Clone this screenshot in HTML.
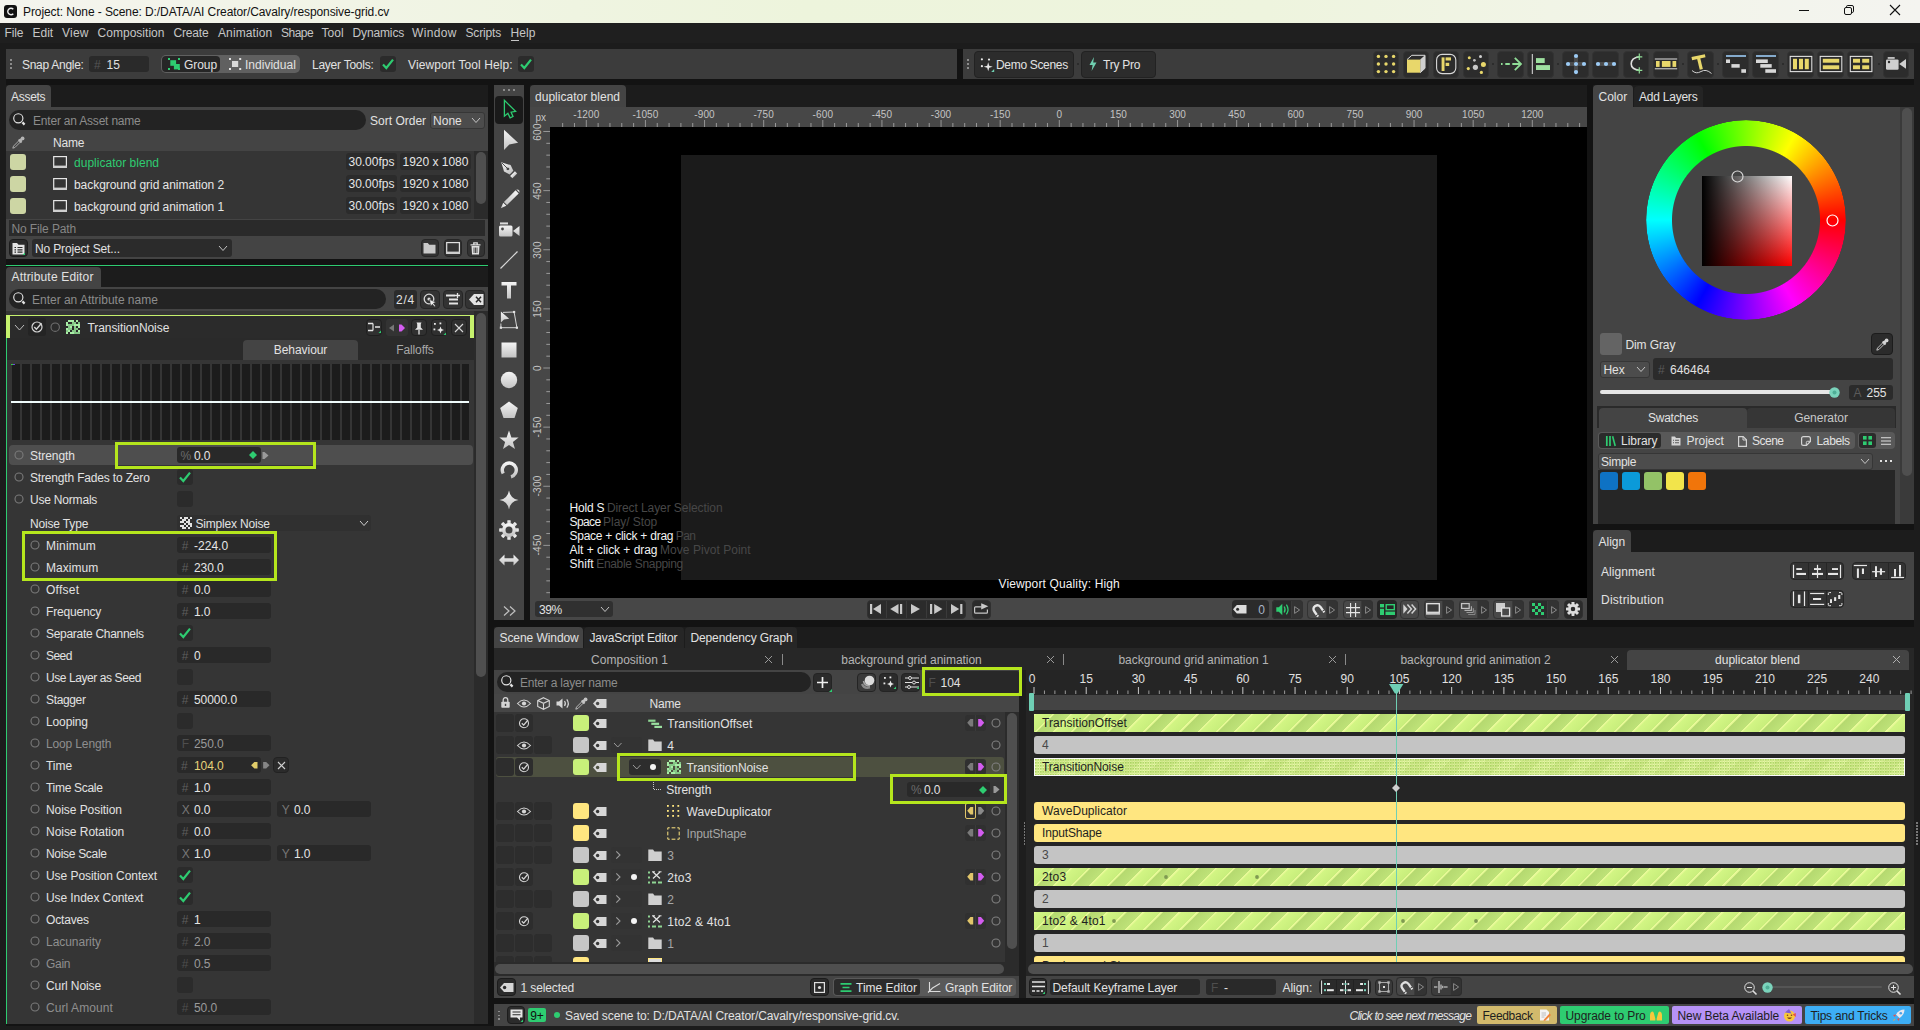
<!DOCTYPE html>
<html><head><meta charset="utf-8"><title>Cavalry</title>
<style>
html,body{margin:0;padding:0;background:#131313;}
body{width:1920px;height:1030px;overflow:hidden;position:relative;font-family:"Liberation Sans",sans-serif;font-size:12px;color:#dcdcdc;}
.a{position:absolute;box-sizing:border-box;}
.t{position:absolute;white-space:nowrap;display:block;}
svg{overflow:visible;}
</style></head><body>
<div class="a" style="left:0px;top:0px;width:1920px;height:23px;background:#eff4e1;background:linear-gradient(90deg,#f4f4ee 0,#f1f4e6 18%,#edf4dc 42%,#eef4de 66%,#f2f4e9 86%,#f4f4f0 100%);"></div>
<svg class="a" style="left:4px;top:5px;" width="13" height="13" viewBox="0 0 13 13"><rect x="0" y="0" width="13" height="13" rx="3" fill="#111"/><path d="M9.3 4.3 A3.2 3.2 0 1 0 9.3 8.7" fill="none" stroke="#eee" stroke-width="1.4"/></svg>
<span class="t" style="left:23.0px;top:1.5px;font-size:12px;color:#111;line-height:20px;letter-spacing:-0.09px;">Project: None - Scene: D:/DATA/AI Creator/Cavalry/responsive-grid.cv</span>
<svg class="a" style="left:1799px;top:5px;" width="10" height="11" viewBox="0 0 10 11"><path d="M0 5.5H10" stroke="#111" stroke-width="1"/></svg>
<svg class="a" style="left:1844px;top:5px;" width="10" height="10" viewBox="0 0 10 10"><rect x="0.5" y="2.5" width="7" height="7" rx="1.5" fill="none" stroke="#111"/><path d="M2.5 2.5V1.8Q2.5 0.5 3.8 0.5H8Q9.5 0.5 9.5 2V6.2Q9.5 7.5 8.2 7.5H7.5" fill="none" stroke="#111"/></svg>
<svg class="a" style="left:1890px;top:5px;" width="10" height="10" viewBox="0 0 10 10"><path d="M0 0L10 10M10 0L0 10" stroke="#111" stroke-width="1.1"/></svg>
<div class="a" style="left:0px;top:43px;width:1920px;height:6px;background:#1c1c1c;"></div>
<div class="a" style="left:0px;top:49px;width:6px;height:981px;background:#1c1c1c;"></div>
<div class="a" style="left:1914px;top:49px;width:6px;height:981px;background:#1c1c1c;"></div>
<div class="a" style="left:0px;top:1026px;width:1920px;height:4px;background:#1c1c1c;"></div>
<div class="a" style="left:0px;top:23px;width:1920px;height:20px;background:#1f1f1f;"></div>
<span class="t" style="left:4.5px;top:23.0px;font-size:12px;color:#c6c6c6;line-height:20px;letter-spacing:-0.14px;">File</span>
<span class="t" style="left:32.5px;top:23.0px;font-size:12px;color:#c6c6c6;line-height:20px;letter-spacing:-0.02px;">Edit</span>
<span class="t" style="left:62.0px;top:23.0px;font-size:12px;color:#c6c6c6;line-height:20px;letter-spacing:0.23px;">View</span>
<span class="t" style="left:97.5px;top:23.0px;font-size:12px;color:#c6c6c6;line-height:20px;letter-spacing:0.03px;">Composition</span>
<span class="t" style="left:173.5px;top:23.0px;font-size:12px;color:#c6c6c6;line-height:20px;letter-spacing:-0.18px;">Create</span>
<span class="t" style="left:218.0px;top:23.0px;font-size:12px;color:#c6c6c6;line-height:20px;letter-spacing:0.11px;">Animation</span>
<span class="t" style="left:281.0px;top:23.0px;font-size:12px;color:#c6c6c6;line-height:20px;letter-spacing:-0.51px;">Shape</span>
<span class="t" style="left:321.5px;top:23.0px;font-size:12px;color:#c6c6c6;line-height:20px;letter-spacing:0.01px;">Tool</span>
<span class="t" style="left:352.5px;top:23.0px;font-size:12px;color:#c6c6c6;line-height:20px;letter-spacing:-0.13px;">Dynamics</span>
<span class="t" style="left:412.0px;top:23.0px;font-size:12px;color:#c6c6c6;line-height:20px;letter-spacing:0.35px;">Window</span>
<span class="t" style="left:465.5px;top:23.0px;font-size:12px;color:#c6c6c6;line-height:20px;letter-spacing:-0.15px;">Scripts</span>
<span class="t" style="left:510.5px;top:23.0px;font-size:12px;color:#c6c6c6;line-height:20px;letter-spacing:0.04px;">Help</span>
<div class="a" style="left:510.5px;top:40px;width:8px;height:1px;background:#c6c6c6;"></div>
<div class="a" style="left:6px;top:49px;width:951px;height:30px;background:#3c3c3c;"></div>
<div class="a" style="left:10px;top:59px;width:2px;height:2px;background:#8c8c8c;"></div>
<div class="a" style="left:10px;top:63px;width:2px;height:2px;background:#8c8c8c;"></div>
<div class="a" style="left:10px;top:67px;width:2px;height:2px;background:#8c8c8c;"></div>
<span class="t" style="left:22.0px;top:55.0px;font-size:12px;color:#e2e2e2;line-height:20px;letter-spacing:-0.28px;">Snap Angle:</span>
<div class="a" style="left:89px;top:56px;width:60px;height:16px;background:#2a2a2a;border-radius:3px;"></div>
<span class="t" style="left:94.0px;top:55.0px;font-size:12px;color:#555;line-height:20px;letter-spacing:0.28px;">#</span>
<span class="t" style="left:106.5px;top:55.0px;font-size:12px;color:#e0e0e0;line-height:20px;">15</span>
<div class="a" style="left:161px;top:55px;width:139px;height:18px;background:#606060;border-radius:5px;"></div>
<div class="a" style="left:162px;top:56px;width:58px;height:16px;background:#262626;border-radius:4px;"></div>
<svg class="a" style="left:168px;top:58px;" width="13" height="13" viewBox="0 0 13 13"><g fill="#2ecc71"><rect x="0" y="0" width="2" height="2"/><rect x="10" y="0" width="2" height="2"/><rect x="0" y="10" width="2" height="2"/><rect x="10" y="10" width="2" height="2"/><rect x="2.3" y="2.2" width="5.8" height="5.6"/><rect x="5.9" y="6" width="5.9" height="5.4"/></g></svg>
<span class="t" style="left:184.0px;top:55.0px;font-size:12px;color:#e2e2e2;line-height:20px;letter-spacing:-0.07px;">Group</span>
<svg class="a" style="left:229px;top:58px;" width="13" height="13" viewBox="0 0 13 13"><g fill="#e2e2e2"><rect x="0" y="0" width="2" height="2"/><rect x="10.2" y="0" width="2" height="2"/><rect x="0" y="10" width="2" height="2"/><rect x="10.2" y="10" width="2" height="2"/><rect x="3" y="3" width="6.2" height="6" fill="#d8d8d8"/></g></svg>
<span class="t" style="left:245.0px;top:55.0px;font-size:12px;color:#e2e2e2;line-height:20px;letter-spacing:0.01px;">Individual</span>
<span class="t" style="left:312.0px;top:55.0px;font-size:12px;color:#e2e2e2;line-height:20px;letter-spacing:-0.25px;">Layer Tools:</span>
<div class="a" style="left:380px;top:56px;width:16px;height:16px;background:#2b2b2b;border-radius:3px;"></div>
<svg class="a" style="left:380px;top:56px;" width="16" height="16" viewBox="0 0 16 16"><path d="M3 8.6 L6.3 12 L13 3.6" fill="none" stroke="#2ecc71" stroke-width="2.2"/></svg>
<span class="t" style="left:408.0px;top:55.0px;font-size:12px;color:#e2e2e2;line-height:20px;letter-spacing:0.09px;">Viewport Tool Help:</span>
<div class="a" style="left:518px;top:56px;width:16px;height:16px;background:#2b2b2b;border-radius:3px;"></div>
<svg class="a" style="left:518px;top:56px;" width="16" height="16" viewBox="0 0 16 16"><path d="M3 8.6 L6.3 12 L13 3.6" fill="none" stroke="#2ecc71" stroke-width="2.2"/></svg>
<div class="a" style="left:963px;top:49px;width:951px;height:30px;background:#3c3c3c;"></div>
<div class="a" style="left:967px;top:59px;width:2px;height:2px;background:#8c8c8c;"></div>
<div class="a" style="left:967px;top:63px;width:2px;height:2px;background:#8c8c8c;"></div>
<div class="a" style="left:967px;top:67px;width:2px;height:2px;background:#8c8c8c;"></div>
<div class="a" style="left:974.3px;top:50.6px;width:99.3px;height:27px;background:#2c2c2c;border-radius:4px;border:1px solid #222;"></div>
<svg class="a" style="left:980px;top:57px;" width="14" height="15" viewBox="0 0 14 15"><g fill="#e8e8e8"><circle cx="1.9" cy="2.3" r="1.1"/><circle cx="9" cy="2.6" r="1.1"/><circle cx="1.9" cy="9.2" r="1.1"/><path d="M8.2 5.3 L9.2 8.8 L12.7 9.8 L9.2 10.8 L8.2 14.3 L7.2 10.8 L3.7 9.8 L7.2 8.8Z"/></g><path d="M11.2 15h3v-3z" fill="#6fcfb0"/></svg>
<span class="t" style="left:996.0px;top:55.0px;font-size:12px;color:#e2e2e2;line-height:20px;letter-spacing:-0.32px;">Demo Scenes</span>
<div class="a" style="left:1081px;top:50.6px;width:74.6px;height:27px;background:#2c2c2c;border-radius:4px;border:1px solid #222;"></div>
<svg class="a" style="left:1089px;top:57px;" width="8" height="14" viewBox="0 0 8 14"><path d="M5 0 L0.5 8 H3.6 L2.6 14 L7.5 5.5 H4.2 Z" fill="#6fcfb0"/></svg>
<span class="t" style="left:1103.0px;top:55.0px;font-size:12px;color:#e2e2e2;line-height:20px;letter-spacing:-0.25px;">Try Pro</span>
<svg class="a" style="left:1076.5px;top:63px;" width="2" height="2" viewBox="0 0 2 2"><circle cx="1" cy="1" r="1" fill="#272727"/></svg>
<div class="a" style="left:1372.7px;top:51px;width:26.6px;height:26.5px;background:#2c2c2c;border-radius:4px;border:1px solid #333333;"></div>
<div class="a" style="left:1402.5px;top:51px;width:26.6px;height:26.5px;background:#2c2c2c;border-radius:4px;border:1px solid #333333;"></div>
<div class="a" style="left:1432.5px;top:51px;width:26.6px;height:26.5px;background:#2c2c2c;border-radius:4px;border:1px solid #333333;"></div>
<div class="a" style="left:1462.5px;top:51px;width:26.6px;height:26.5px;background:#2c2c2c;border-radius:4px;border:1px solid #333333;"></div>
<div class="a" style="left:1497.4px;top:51px;width:26.6px;height:26.5px;background:#2c2c2c;border-radius:4px;border:1px solid #333333;"></div>
<div class="a" style="left:1527.4px;top:51px;width:26.6px;height:26.5px;background:#2c2c2c;border-radius:4px;border:1px solid #333333;"></div>
<div class="a" style="left:1562.4px;top:51px;width:26.6px;height:26.5px;background:#2c2c2c;border-radius:4px;border:1px solid #333333;"></div>
<div class="a" style="left:1592.4px;top:51px;width:26.6px;height:26.5px;background:#2c2c2c;border-radius:4px;border:1px solid #333333;"></div>
<div class="a" style="left:1622.5px;top:51px;width:26.6px;height:26.5px;background:#2c2c2c;border-radius:4px;border:1px solid #333333;"></div>
<div class="a" style="left:1652.5px;top:51px;width:26.6px;height:26.5px;background:#2c2c2c;border-radius:4px;border:1px solid #333333;"></div>
<div class="a" style="left:1687.4px;top:51px;width:26.6px;height:26.5px;background:#2c2c2c;border-radius:4px;border:1px solid #333333;"></div>
<div class="a" style="left:1722.4px;top:51px;width:26.6px;height:26.5px;background:#2c2c2c;border-radius:4px;border:1px solid #333333;"></div>
<div class="a" style="left:1752.4px;top:51px;width:26.6px;height:26.5px;background:#2c2c2c;border-radius:4px;border:1px solid #333333;"></div>
<div class="a" style="left:1787.4px;top:51px;width:26.6px;height:26.5px;background:#2c2c2c;border-radius:4px;border:1px solid #333333;"></div>
<div class="a" style="left:1817.4px;top:51px;width:26.6px;height:26.5px;background:#2c2c2c;border-radius:4px;border:1px solid #333333;"></div>
<div class="a" style="left:1847.4px;top:51px;width:26.6px;height:26.5px;background:#2c2c2c;border-radius:4px;border:1px solid #333333;"></div>
<div class="a" style="left:1882.7px;top:51px;width:26.6px;height:26.5px;background:#2c2c2c;border-radius:4px;border:1px solid #333333;"></div>
<svg class="a" style="left:1492.3px;top:63.2px;" width="2" height="2" viewBox="0 0 2 2"><circle cx="1" cy="1" r="1" fill="#272727"/></svg>
<svg class="a" style="left:1557.3px;top:63.2px;" width="2" height="2" viewBox="0 0 2 2"><circle cx="1" cy="1" r="1" fill="#272727"/></svg>
<svg class="a" style="left:1682.3px;top:63.2px;" width="2" height="2" viewBox="0 0 2 2"><circle cx="1" cy="1" r="1" fill="#272727"/></svg>
<svg class="a" style="left:1717.3px;top:63.2px;" width="2" height="2" viewBox="0 0 2 2"><circle cx="1" cy="1" r="1" fill="#272727"/></svg>
<svg class="a" style="left:1782.3px;top:63.2px;" width="2" height="2" viewBox="0 0 2 2"><circle cx="1" cy="1" r="1" fill="#272727"/></svg>
<svg class="a" style="left:1877.5px;top:63.2px;" width="2" height="2" viewBox="0 0 2 2"><circle cx="1" cy="1" r="1" fill="#272727"/></svg>
<svg class="a" style="left:1360px;top:45px" width="560" height="40" viewBox="1360 45 560 40"><circle cx="1378.4" cy="56.4" r="1.7" fill="#e8d76b"/><circle cx="1378.4" cy="64" r="1.7" fill="#e8d76b"/><circle cx="1378.4" cy="71.6" r="1.7" fill="#e8d76b"/><circle cx="1386" cy="56.4" r="1.7" fill="#e8d76b"/><circle cx="1386" cy="64" r="1.7" fill="#e8d76b"/><circle cx="1386" cy="71.6" r="1.7" fill="#e8d76b"/><circle cx="1393.6" cy="56.4" r="1.7" fill="#e8d76b"/><circle cx="1393.6" cy="64" r="1.7" fill="#e8d76b"/><circle cx="1393.6" cy="71.6" r="1.7" fill="#e8d76b"/><path d="M1407 59.6 L1411.8 55.3 H1425 V68.3 L1420.2 72.7" fill="#2c2c2c" stroke="#dcdcdc" stroke-width="1"/><path d="M1420.2 59.6 L1425 55.3 V68.3 L1420.2 72.7Z" fill="#cfcfcf"/><rect x="1407" y="59.6" width="13.2" height="13.1" fill="#e8d76b"/><rect x="1436.6" y="54.4" width="19.2" height="19.2" rx="5.5" fill="none" stroke="#d8d8d8" stroke-width="1.1"/><rect x="1441.6" y="57.4" width="2.9" height="13.6" fill="#e8d76b"/><rect x="1445.6" y="57.4" width="5.4" height="3.1" fill="#e8d76b"/><rect x="1445.6" y="62.8" width="3.6" height="3.2" fill="#e8d76b"/><circle cx="1469.3" cy="57.7" r="1.5" fill="#e8d76b"/><circle cx="1480.5" cy="56.4" r="1.5" fill="#d0d0d0"/><circle cx="1474.4" cy="60.3" r="1.4" fill="#bcbcbc"/><circle cx="1483.4" cy="64.4" r="2.5" fill="#e8d76b"/><circle cx="1475.4" cy="67.3" r="2.6" fill="#c8c8c8"/><circle cx="1468.3" cy="68.6" r="1.6" fill="#e8d76b"/><circle cx="1481.4" cy="72.4" r="1.6" fill="#e8d76b"/><path d="M1501 64H1502.6M1505.3 64H1509.8M1512.3 64H1520.5M1514.8 57.8L1521 64L1514.8 70.2" fill="none" stroke="#8fdc96" stroke-width="1.8"/><rect x="1531.8" y="54" width="1" height="20" fill="#e0e0e0"/><rect x="1536" y="58.1" width="8.7" height="4.9" fill="#9ee0a0"/><rect x="1536" y="65.1" width="14" height="4.9" fill="#9ee0a0"/><path d="M1576 56V72M1568 64H1584" stroke="#4c4c4c" stroke-width="4"/><circle cx="1576" cy="56" r="2.1" fill="#9ccbf5"/><circle cx="1576" cy="64" r="2.1" fill="#9ccbf5"/><circle cx="1576" cy="72.1" r="2.1" fill="#9ccbf5"/><circle cx="1568" cy="64" r="2.1" fill="#9ccbf5"/><circle cx="1584" cy="64" r="2.1" fill="#9ccbf5"/><path d="M1598 64H1614" stroke="#4c4c4c" stroke-width="4" stroke-linecap="round"/><circle cx="1598" cy="64" r="2.1" fill="#9ccbf5"/><circle cx="1606" cy="64" r="2.1" fill="#9ccbf5"/><circle cx="1614" cy="64" r="2.1" fill="#9ccbf5"/><path d="M1639.3 56.8 Q1631.2 58 1631.2 63.8 Q1631.2 69.3 1639.3 70.3" fill="none" stroke="#dedede" stroke-width="1.6"/><path d="M1639.3 53.6V60M1636.3 56.8H1642.3M1639.3 67.2V73.4M1636.3 70.3H1642.3" stroke="#8fdc96" stroke-width="1.2"/><path d="M1654.8 59H1677.2M1654.8 68.8H1677.2" stroke="#e0e0e0" stroke-width="1"/><rect x="1656" y="61" width="3.6" height="5.9" fill="#e8d76b"/><rect x="1661.9" y="61" width="8.6" height="5.9" fill="#e8d76b"/><rect x="1672.5" y="61" width="3.7" height="5.9" fill="#e8d76b"/><path d="M1691.8 58.6L1705.2 55.8" stroke="#e8d76b" stroke-width="3.2"/><path d="M1698.4 57.4L1701.3 69.3" stroke="#e8d76b" stroke-width="3.2"/><path d="M1692 70.5 Q1696 74.5 1701 71.5 T1711.5 73.5" fill="none" stroke="#d0d0d0" stroke-width="1"/><rect x="1726" y="55.2" width="20" height="1.6" fill="#9ccbf5"/><rect x="1726" y="59.4" width="4" height="3.6" fill="#d8d8d8"/><rect x="1731.4" y="64.1" width="8.3" height="3.6" fill="#d8d8d8"/><rect x="1741.3" y="69.2" width="4.7" height="3.6" fill="#d8d8d8"/><rect x="1756" y="55.2" width="20" height="1.6" fill="#9ccbf5"/><rect x="1756" y="59.4" width="11.8" height="3.6" fill="#d8d8d8"/><rect x="1760.3" y="64.1" width="11.4" height="3.6" fill="#d8d8d8"/><rect x="1765.3" y="69.2" width="10.7" height="3.6" fill="#d8d8d8"/><rect x="1790.2" y="56.4" width="21.6" height="15.2" fill="none" stroke="#e0e0e0" stroke-width="1.1"/><rect x="1820.2" y="56.4" width="21.6" height="15.2" fill="none" stroke="#e0e0e0" stroke-width="1.1"/><rect x="1850.3" y="56.4" width="21.6" height="15.2" fill="none" stroke="#e0e0e0" stroke-width="1.1"/><rect x="1793" y="58.8" width="4" height="10.4" fill="#e8d76b"/><rect x="1799" y="58.8" width="4" height="10.4" fill="#e8d76b"/><rect x="1804.8" y="58.8" width="4" height="10.4" fill="#e8d76b"/><rect x="1822.8" y="58.8" width="16.4" height="3.9" fill="#e8d76b"/><rect x="1822.8" y="65.3" width="16.4" height="3.9" fill="#e8d76b"/><rect x="1853" y="58.8" width="7" height="3.9" fill="#e8d76b"/><rect x="1853" y="65.3" width="7" height="3.9" fill="#e8d76b"/><rect x="1862.2" y="58.8" width="7" height="3.9" fill="#e8d76b"/><rect x="1862.2" y="65.3" width="7" height="3.9" fill="#e8d76b"/><rect x="1886" y="59.4" width="12.6" height="10.3" rx="1.2" fill="#cfcfcf"/><rect x="1887.7" y="57.1" width="7" height="1.7" fill="#cfcfcf"/><path d="M1899.2 64 L1906 59 V68.8Z" fill="#cfcfcf"/><circle cx="1889" cy="62" r="1.2" fill="#2c2c2c"/></svg>
<div class="a" style="left:6px;top:85px;width:482px;height:22px;background:#1c1c1c;"></div>
<div class="a" style="left:6px;top:85px;width:45px;height:22px;background:#444444;border-radius:4px 4px 0 0;"></div>
<span class="t" style="left:11.0px;top:86.5px;font-size:12px;color:#e2e2e2;line-height:20px;letter-spacing:-0.28px;">Assets</span>
<div class="a" style="left:6px;top:107px;width:482px;height:152px;background:#444444;"></div>
<div class="a" style="left:9px;top:110px;width:357px;height:20px;background:#232323;border-radius:10px;"></div>
<svg class="a" style="left:13px;top:113px;" width="14" height="14" viewBox="0 0 14 14"><circle cx="5.3" cy="5.3" r="4.6" fill="none" stroke="#e4e4e4" stroke-width="1.15"/><path d="M9.4 9.4 L11.6 11.6" stroke="#e4e4e4" stroke-width="2.2"/></svg>
<span class="t" style="left:33.0px;top:110.5px;font-size:12px;color:#8c8c8c;line-height:20px;letter-spacing:-0.2px;">Enter an Asset name</span>
<span class="t" style="left:370.0px;top:110.5px;font-size:12px;color:#e2e2e2;line-height:20px;letter-spacing:0.01px;">Sort Order</span>
<div class="a" style="left:430px;top:112px;width:55px;height:17px;background:#4c4c4c;border-radius:3px;border:1px solid #363636;"></div>
<span class="t" style="left:433.0px;top:110.5px;font-size:12px;color:#e2e2e2;line-height:20px;letter-spacing:0.03px;">None</span>
<svg class="a" style="left:472.0px;top:118.25px;" width="8" height="4.5" viewBox="0 0 8 4.5"><path d="M0 0 L4.0 4.5 L8 0" fill="none" stroke="#c4c4c4" stroke-width="1"/></svg>
<div class="a" style="left:6px;top:132px;width:482px;height:19px;background:#444444;"></div>
<svg class="a" style="left:12px;top:135.5px;" width="13" height="13" viewBox="0 0 13 13"><path d="M0.8 12.2 L1.5 10.1 L7.1 4.5 L8.5 5.9 L2.9 11.5 Z" fill="none" stroke="#b4b4b4" stroke-width="0.9"/><path d="M6.6 3.4 L9.6 6.4" stroke="#b4b4b4" stroke-width="2.1"/><path d="M8 4.8 L10.3 2.6" stroke="#b4b4b4" stroke-width="2.6"/><circle cx="10.6" cy="2.4" r="1.9" fill="#b4b4b4"/></svg>
<span class="t" style="left:53.0px;top:132.5px;font-size:12px;color:#e2e2e2;line-height:20px;letter-spacing:-0.21px;">Name</span>
<div class="a" style="left:6px;top:151px;width:468px;height:68px;background:#353535;"></div>
<div class="a" style="left:474px;top:151px;width:14px;height:68px;background:#2b2b2b;"></div>
<div class="a" style="left:10px;top:153.8px;width:16px;height:16.4px;background:#cdd6a4;border-radius:3px;"></div>
<svg class="a" style="left:52.5px;top:155.5px;" width="15" height="13" viewBox="0 0 15 13"><rect x="0.7" y="0.6" width="12.7" height="10.6" fill="none" stroke="#e6e6e6" stroke-width="1.2"/><rect x="0.1" y="9.6" width="13.9" height="2.4" fill="#cfcfcf"/></svg>
<span class="t" style="left:74.0px;top:152.5px;font-size:12px;color:#2ecc71;line-height:20px;letter-spacing:0.02px;">duplicator blend</span>
<div class="a" style="left:346px;top:153px;width:51px;height:17px;background:#2b2b2b;border-radius:3px;"></div>
<span class="t" style="left:348.5px;top:152.0px;font-size:12px;color:#e6e6e6;line-height:20px;letter-spacing:-0.02px;">30.00fps</span>
<div class="a" style="left:400px;top:153px;width:71px;height:17px;background:#2b2b2b;border-radius:3px;"></div>
<span class="t" style="left:402.5px;top:152.0px;font-size:12px;color:#e6e6e6;line-height:20px;letter-spacing:-0.02px;">1920 x 1080</span>
<div class="a" style="left:10px;top:175.8px;width:16px;height:16.4px;background:#cdd6a4;border-radius:3px;"></div>
<svg class="a" style="left:52.5px;top:177.5px;" width="15" height="13" viewBox="0 0 15 13"><rect x="0.7" y="0.6" width="12.7" height="10.6" fill="none" stroke="#e6e6e6" stroke-width="1.2"/><rect x="0.1" y="9.6" width="13.9" height="2.4" fill="#cfcfcf"/></svg>
<span class="t" style="left:74.0px;top:174.5px;font-size:12px;color:#e6e6e6;line-height:20px;letter-spacing:-0.05px;">background grid animation 2</span>
<div class="a" style="left:346px;top:175px;width:51px;height:17px;background:#2b2b2b;border-radius:3px;"></div>
<span class="t" style="left:348.5px;top:174.0px;font-size:12px;color:#e6e6e6;line-height:20px;letter-spacing:-0.02px;">30.00fps</span>
<div class="a" style="left:400px;top:175px;width:71px;height:17px;background:#2b2b2b;border-radius:3px;"></div>
<span class="t" style="left:402.5px;top:174.0px;font-size:12px;color:#e6e6e6;line-height:20px;letter-spacing:-0.02px;">1920 x 1080</span>
<div class="a" style="left:10px;top:197.8px;width:16px;height:16.4px;background:#cdd6a4;border-radius:3px;"></div>
<svg class="a" style="left:52.5px;top:199.5px;" width="15" height="13" viewBox="0 0 15 13"><rect x="0.7" y="0.6" width="12.7" height="10.6" fill="none" stroke="#e6e6e6" stroke-width="1.2"/><rect x="0.1" y="9.6" width="13.9" height="2.4" fill="#cfcfcf"/></svg>
<span class="t" style="left:74.0px;top:196.5px;font-size:12px;color:#e6e6e6;line-height:20px;letter-spacing:-0.05px;">background grid animation 1</span>
<div class="a" style="left:346px;top:197px;width:51px;height:17px;background:#2b2b2b;border-radius:3px;"></div>
<span class="t" style="left:348.5px;top:196.0px;font-size:12px;color:#e6e6e6;line-height:20px;letter-spacing:-0.02px;">30.00fps</span>
<div class="a" style="left:400px;top:197px;width:71px;height:17px;background:#2b2b2b;border-radius:3px;"></div>
<span class="t" style="left:402.5px;top:196.0px;font-size:12px;color:#e6e6e6;line-height:20px;letter-spacing:-0.02px;">1920 x 1080</span>
<div class="a" style="left:476px;top:152px;width:10px;height:52px;background:#4f4f4f;border-radius:5px;"></div>
<div class="a" style="left:9px;top:220px;width:476px;height:16px;background:#2a2a2a;"></div>
<span class="t" style="left:11.5px;top:218.5px;font-size:12px;color:#868686;line-height:20px;letter-spacing:-0.12px;">No File Path</span>
<div class="a" style="left:9px;top:239px;width:19px;height:18px;background:#2b2b2b;border-radius:4px;border:1px solid #1c1c1c;"></div>
<svg class="a" style="left:12px;top:241.5px;" width="13" height="13" viewBox="0 0 13 13"><path d="M0.5 1H5L6.5 2.8H12.5V12.5H0.5Z" fill="#e4e4e4"/><path d="M2.5 5.5H4M5.5 5.5H10.5M2.5 7.8H4M5.5 7.8H10.5M2.5 10.1H4M5.5 10.1H10.5" stroke="#2b2b2b" stroke-width="1.2"/><path d="M10.5 13h2.5v-2.5z" fill="#2ecc71"/></svg>
<div class="a" style="left:32px;top:239px;width:200px;height:18px;background:#2b2b2b;border-radius:3px;"></div>
<span class="t" style="left:35.0px;top:238.5px;font-size:12px;color:#e2e2e2;line-height:20px;letter-spacing:-0.15px;">No Project Set...</span>
<svg class="a" style="left:219.0px;top:246.25px;" width="8" height="4.5" viewBox="0 0 8 4.5"><path d="M0 0 L4.0 4.5 L8 0" fill="none" stroke="#c4c4c4" stroke-width="1"/></svg>
<div class="a" style="left:420.5px;top:238.7px;width:18.5px;height:18.3px;background:#333;border-radius:4px;border:1px solid #262626;"></div>
<div class="a" style="left:443.6px;top:238.7px;width:18.5px;height:18.3px;background:#333;border-radius:4px;border:1px solid #262626;"></div>
<div class="a" style="left:466.7px;top:238.7px;width:18.5px;height:18.3px;background:#333;border-radius:4px;border:1px solid #262626;"></div>
<svg class="a" style="left:423px;top:242px;" width="13" height="12" viewBox="0 0 13 12"><path d="M0.5 1H4.8L6.3 2.8H12.5V11.5H0.5Z" fill="#c9c9c9"/></svg>
<svg class="a" style="left:445.5px;top:242px;" width="15" height="13" viewBox="0 0 15 13"><rect x="0.7" y="0.6" width="12.7" height="10.6" fill="none" stroke="#e0e0e0" stroke-width="1.2"/><rect x="0.1" y="9.6" width="13.9" height="2.4" fill="#cfcfcf"/></svg>
<svg class="a" style="left:470px;top:241.5px;" width="11" height="13" viewBox="0 0 11 13"><path d="M0.5 2.8H10.5M3.8 2.5V0.8H7.2V2.5" stroke="#e0e0e0" stroke-width="1.3" fill="none"/><path d="M1.5 4H9.5L9 12.5H2Z" fill="#e0e0e0"/><path d="M4 5.5V11M5.5 5.5V11M7 5.5V11" stroke="#2b2b2b" stroke-width="0.8"/></svg>
<div class="a" style="left:6px;top:264.7px;width:482px;height:1.8px;background:#2ecc71;"></div>
<div class="a" style="left:6px;top:266.5px;width:482px;height:20.5px;background:#1c1c1c;"></div>
<div class="a" style="left:6px;top:267px;width:95px;height:20px;background:#444444;border-radius:4px 4px 0 0;"></div>
<span class="t" style="left:11.5px;top:267.0px;font-size:12px;color:#e2e2e2;line-height:20px;letter-spacing:0.17px;">Attribute Editor</span>
<div class="a" style="left:6px;top:287px;width:482px;height:737px;background:#444444;"></div>
<div class="a" style="left:6px;top:311px;width:468px;height:713px;background:#353535;"></div>
<div class="a" style="left:474px;top:311px;width:14px;height:713px;background:#2b2b2b;"></div>
<div class="a" style="left:9px;top:289px;width:377px;height:20px;background:#232323;border-radius:10px;"></div>
<svg class="a" style="left:13px;top:292px;" width="14" height="14" viewBox="0 0 14 14"><circle cx="5.3" cy="5.3" r="4.6" fill="none" stroke="#e4e4e4" stroke-width="1.15"/><path d="M9.4 9.4 L11.6 11.6" stroke="#e4e4e4" stroke-width="2.2"/></svg>
<span class="t" style="left:32.0px;top:289.5px;font-size:12px;color:#8c8c8c;line-height:20px;letter-spacing:-0.01px;">Enter an Attribute name</span>
<div class="a" style="left:394px;top:290px;width:23px;height:19px;background:#2b2b2b;border-radius:3px;"></div>
<span class="t" style="left:396.1px;top:289.5px;font-size:12px;color:#e2e2e2;line-height:20px;letter-spacing:0.71px;">2/4</span>
<div class="a" style="left:420.2px;top:289.5px;width:19.4px;height:19.2px;background:#333;border-radius:4px;border:1px solid #262626;"></div>
<div class="a" style="left:443.4px;top:289.5px;width:19.4px;height:19.2px;background:#333;border-radius:4px;border:1px solid #262626;"></div>
<div class="a" style="left:465.3px;top:289.5px;width:19.4px;height:19.2px;background:#333;border-radius:4px;border:1px solid #262626;"></div>
<svg class="a" style="left:423px;top:292.5px;" width="14" height="14" viewBox="0 0 14 14"><circle cx="6" cy="6" r="4.8" fill="none" stroke="#d8d8d8" stroke-width="1.3"/><circle cx="6" cy="6" r="1.6" fill="#d8d8d8"/><path d="M6.5 6.5 L13 9.3 L10.3 10.3 L12.5 13 L11.5 13.8 L9.3 11.2 L7.8 13.3 Z" fill="#f0f0f0" stroke="#2b2b2b" stroke-width="0.5"/></svg>
<svg class="a" style="left:446px;top:293px;" width="14" height="13" viewBox="0 0 14 13"><path d="M0 2.5H9M3 6.5H12M3 10.5H12" stroke="#e4e4e4" stroke-width="1.8"/><path d="M11.5 0V5M9 2.5H14" stroke="#e4e4e4" stroke-width="1.3"/></svg>
<svg class="a" style="left:468.5px;top:294px;" width="15" height="11" viewBox="0 0 15 11"><path d="M5 0H14.5V11H5L0 5.5Z" fill="#e4e4e4"/><path d="M7 2.8L12 8.2M12 2.8L7 8.2" stroke="#2b2b2b" stroke-width="1.5"/></svg>
<div class="a" style="left:476px;top:312.5px;width:10px;height:364px;background:#4f4f4f;border-radius:5px;"></div>
<div class="a" style="left:6px;top:315px;width:468px;height:23px;background:#2b2b2b;"></div>
<div class="a" style="left:6px;top:314.8px;width:468px;height:1.6px;background:#c6f16d;"></div>
<div class="a" style="left:6px;top:315px;width:4px;height:23px;background:#c6f16d;"></div>
<div class="a" style="left:470px;top:315px;width:4px;height:23px;background:#c6f16d;"></div>
<div class="a" style="left:6px;top:338px;width:1.3px;height:686px;background:#2ecc71;"></div>
<svg class="a" style="left:14.5px;top:325.0px;" width="9" height="5" viewBox="0 0 9 5"><path d="M0 0 L4.5 5 L9 0" fill="none" stroke="#bdbdbd" stroke-width="1"/></svg>
<div class="a" style="left:28px;top:318px;width:18px;height:18px;background:#242424;border-radius:3px;"></div>
<svg class="a" style="left:31px;top:321px;" width="12" height="12" viewBox="0 0 12 12"><circle cx="6" cy="6" r="5" fill="none" stroke="#d6d6d6" stroke-width="1.2"/><path d="M3.3 6 L5.4 8.2 L10.5 2.2" fill="none" stroke="#d6d6d6" stroke-width="1.4"/></svg>
<svg class="a" style="left:49.8px;top:321.8px;" width="10.4" height="10.4" viewBox="0 0 10.4 10.4"><circle cx="5.2" cy="5.2" r="4.2" fill="none" stroke="#6e6e6e" stroke-width="1.1"/></svg>
<svg class="a" style="left:66px;top:320px;shape-rendering:crispEdges;" width="14" height="14" viewBox="0 0 14 14"><rect x="2.00" y="0.00" width="2.00" height="2.00" fill="#a8eea6"/><rect x="4.00" y="0.00" width="2.00" height="2.00" fill="#a8eea6"/><rect x="6.00" y="0.00" width="2.00" height="2.00" fill="#a8eea6"/><rect x="10.00" y="0.00" width="2.00" height="2.00" fill="#a8eea6"/><rect x="0.00" y="2.00" width="2.00" height="2.00" fill="#a8eea6"/><rect x="6.00" y="2.00" width="2.00" height="2.00" fill="#84c686"/><rect x="8.00" y="2.00" width="2.00" height="2.00" fill="#84c686"/><rect x="12.00" y="2.00" width="2.00" height="2.00" fill="#84c686"/><rect x="0.00" y="4.00" width="2.00" height="2.00" fill="#a8eea6"/><rect x="2.00" y="4.00" width="2.00" height="2.00" fill="#84c686"/><rect x="4.00" y="4.00" width="2.00" height="2.00" fill="#84c686"/><rect x="6.00" y="4.00" width="2.00" height="2.00" fill="#84c686"/><rect x="8.00" y="4.00" width="2.00" height="2.00" fill="#a8eea6"/><rect x="10.00" y="4.00" width="2.00" height="2.00" fill="#a8eea6"/><rect x="12.00" y="4.00" width="2.00" height="2.00" fill="#a8eea6"/><rect x="2.00" y="6.00" width="2.00" height="2.00" fill="#84c686"/><rect x="4.00" y="6.00" width="2.00" height="2.00" fill="#a8eea6"/><rect x="8.00" y="6.00" width="2.00" height="2.00" fill="#84c686"/><rect x="12.00" y="6.00" width="2.00" height="2.00" fill="#a8eea6"/><rect x="0.00" y="8.00" width="2.00" height="2.00" fill="#a8eea6"/><rect x="2.00" y="8.00" width="2.00" height="2.00" fill="#84c686"/><rect x="4.00" y="8.00" width="2.00" height="2.00" fill="#84c686"/><rect x="8.00" y="8.00" width="2.00" height="2.00" fill="#84c686"/><rect x="10.00" y="8.00" width="2.00" height="2.00" fill="#84c686"/><rect x="0.00" y="10.00" width="2.00" height="2.00" fill="#84c686"/><rect x="2.00" y="10.00" width="2.00" height="2.00" fill="#a8eea6"/><rect x="6.00" y="10.00" width="2.00" height="2.00" fill="#84c686"/><rect x="8.00" y="10.00" width="2.00" height="2.00" fill="#84c686"/><rect x="12.00" y="10.00" width="2.00" height="2.00" fill="#a8eea6"/><rect x="0.00" y="12.00" width="2.00" height="2.00" fill="#a8eea6"/><rect x="4.00" y="12.00" width="2.00" height="2.00" fill="#a8eea6"/><rect x="6.00" y="12.00" width="2.00" height="2.00" fill="#a8eea6"/><rect x="8.00" y="12.00" width="2.00" height="2.00" fill="#84c686"/><rect x="10.00" y="12.00" width="2.00" height="2.00" fill="#84c686"/><rect x="12.00" y="12.00" width="2.00" height="2.00" fill="#84c686"/></svg>
<span class="t" style="left:87.5px;top:317.5px;font-size:12px;color:#e2e2e2;line-height:20px;letter-spacing:-0.08px;">TransitionNoise</span>
<div class="a" style="left:365.5px;top:318.7px;width:16.8px;height:17px;background:#303030;border-radius:4px;border:1px solid #1f1f1f;"></div>
<div class="a" style="left:410.5px;top:318.7px;width:16.8px;height:17px;background:#303030;border-radius:4px;border:1px solid #1f1f1f;"></div>
<div class="a" style="left:430.6px;top:318.7px;width:16.8px;height:17px;background:#303030;border-radius:4px;border:1px solid #1f1f1f;"></div>
<div class="a" style="left:450.7px;top:318.7px;width:16.8px;height:17px;background:#303030;border-radius:4px;border:1px solid #1f1f1f;"></div>
<svg class="a" style="left:367.5px;top:322px;" width="13" height="11" viewBox="0 0 13 11"><path d="M0 1.5H5M0 8.5H5M7 5H12" stroke="#e6e6e6" stroke-width="1.6"/><path d="M5 1.5V8.5" stroke="#e6e6e6" stroke-width="1.2"/><path d="M10.5 11h2.5v-2.5z" fill="#2ecc71"/></svg>
<div class="a" style="left:386px;top:319px;width:22px;height:17px;background:#333;border-radius:3px;"></div>
<svg class="a" style="left:388px;top:323.5px;" width="8" height="8" viewBox="0 0 8 8"><path d="M6 0.5V7.5L1 4Z" fill="#777"/></svg>
<svg class="a" style="left:398px;top:323.5px;" width="8" height="8" viewBox="0 0 8 8"><path d="M1 0.5H3.5L7 4L3.5 7.5H1Z" fill="#d35cf0"/></svg>
<svg class="a" style="left:413.5px;top:321.5px;" width="10" height="13" viewBox="0 0 10 13"><path d="M2.5 0.5H7.5L6.8 2V5.5L9 7.8H1L3.2 5.5V2Z" fill="#e4e4e4"/><path d="M5 8V12.5" stroke="#e4e4e4" stroke-width="1.3"/></svg>
<svg class="a" style="left:432.5px;top:321.5px;" width="13" height="13" viewBox="0 0 13 13"><g fill="#e8e8e8"><rect x="1" y="1" width="1.8" height="1.8"/><rect x="6.5" y="0.5" width="1.8" height="1.8"/><rect x="0.5" y="6.5" width="1.8" height="1.8"/><path d="M7.5 4.5 L8.5 7 L11 8 L8.5 9 L7.5 11.5 L6.5 9 L4 8 L6.5 7Z"/></g><path d="M10.5 13h2.5v-2.5z" fill="#2ecc71"/></svg>
<svg class="a" style="left:454.5px;top:323.5px;" width="8" height="8" viewBox="0 0 8 8"><path d="M0 0L8 8M8 0L0 8" stroke="#d8d8d8" stroke-width="1.1"/></svg>
<div class="a" style="left:7.3px;top:338px;width:466.7px;height:22px;background:#2a2a2a;"></div>
<div class="a" style="left:243px;top:340px;width:115px;height:20px;background:#444444;border-radius:4px 4px 0 0;"></div>
<span class="t" style="left:273.8px;top:340.0px;font-size:12px;color:#e2e2e2;line-height:20px;letter-spacing:-0.06px;">Behaviour</span>
<span class="t" style="left:396.3px;top:340.0px;font-size:12px;color:#a8a8a8;line-height:20px;letter-spacing:-0.13px;">Falloffs</span>
<div class="a" style="left:11.9px;top:364px;width:457.4px;height:76px;background:#1c1c1c;background:repeating-linear-gradient(90deg,#1c1c1c 0,#1c1c1c 8.1px,#353535 8.1px,#353535 10px);"></div>
<div class="a" style="left:11px;top:401px;width:458.3px;height:2.1px;background:#f0fcfc;"></div>
<div class="a" style="left:11px;top:364px;width:2px;height:1px;background:#2ecc40;"></div>
<div class="a" style="left:13px;top:364px;width:2px;height:1px;background:#6a4ae0;"></div>
<div class="a" style="left:9px;top:445px;width:464px;height:20px;background:#4e4e4e;border-radius:4px;"></div>
<div class="a" style="left:115px;top:442px;width:201px;height:27px;border:3px solid #b5e61d;"></div>
<svg class="a" style="left:14px;top:450px;" width="10" height="10" viewBox="0 0 10 10"><circle cx="5" cy="5" r="4" fill="none" stroke="#7a7a7a" stroke-width="1.1"/></svg>
<span class="t" style="left:30.0px;top:445.5px;font-size:12px;color:#e2e2e2;line-height:20px;letter-spacing:-0.05px;">Strength</span>
<div class="a" style="left:177px;top:447px;width:84px;height:16px;background:#292929;border-radius:3px;"></div>
<span class="t" style="left:180.5px;top:445.5px;font-size:12px;color:#6a6a6a;line-height:20px;letter-spacing:-1.05px;">%</span>
<span class="t" style="left:194.0px;top:445.5px;font-size:12px;color:#e6e6e6;line-height:20px;letter-spacing:-0.13px;">0.0</span>
<svg class="a" style="left:249px;top:451px;" width="8" height="8" viewBox="0 0 8 8"><path d="M4 0L8 4L4 8L0 4Z" fill="#2ecc71"/></svg>
<svg class="a" style="left:262px;top:451.5px;" width="7" height="7" viewBox="0 0 7 7"><path d="M0.5 0H2.5L6.5 3.5L2.5 7H0.5Z" fill="#9a9a9a"/></svg>
<svg class="a" style="left:14px;top:472px;" width="10" height="10" viewBox="0 0 10 10"><circle cx="5" cy="5" r="4" fill="none" stroke="#7a7a7a" stroke-width="1.1"/></svg>
<span class="t" style="left:30.0px;top:467.5px;font-size:12px;color:#e2e2e2;line-height:20px;letter-spacing:-0.17px;">Strength Fades to Zero</span>
<div class="a" style="left:177px;top:469px;width:16px;height:16px;background:#2b2b2b;border-radius:3px;"></div>
<svg class="a" style="left:177px;top:469px;" width="16" height="16" viewBox="0 0 16 16"><path d="M3 8.6 L6.3 12 L13 3.6" fill="none" stroke="#2ecc71" stroke-width="2.2"/></svg>
<svg class="a" style="left:14px;top:494px;" width="10" height="10" viewBox="0 0 10 10"><circle cx="5" cy="5" r="4" fill="none" stroke="#7a7a7a" stroke-width="1.1"/></svg>
<span class="t" style="left:30.0px;top:489.5px;font-size:12px;color:#e2e2e2;line-height:20px;letter-spacing:-0.2px;">Use Normals</span>
<div class="a" style="left:177px;top:491px;width:16px;height:16px;background:#2b2b2b;border-radius:3px;"></div>
<span class="t" style="left:30.0px;top:513.5px;font-size:12px;color:#e2e2e2;line-height:20px;letter-spacing:-0.16px;">Noise Type</span>
<div class="a" style="left:177px;top:515px;width:194px;height:16px;background:#303030;border-radius:3px;"></div>
<svg class="a" style="left:180px;top:517px;shape-rendering:crispEdges;" width="12" height="12" viewBox="0 0 12 12"><rect x="0" y="0" width="2" height="2" fill="#e2e2e2"/><rect x="4" y="0" width="2" height="2" fill="#e2e2e2"/><rect x="6" y="0" width="2" height="2" fill="#e2e2e2"/><rect x="10" y="0" width="2" height="2" fill="#e2e2e2"/><rect x="2" y="2" width="2" height="2" fill="#e2e2e2"/><rect x="4" y="2" width="2" height="2" fill="#e2e2e2"/><rect x="8" y="2" width="2" height="2" fill="#e2e2e2"/><rect x="0" y="4" width="2" height="2" fill="#e2e2e2"/><rect x="2" y="4" width="2" height="2" fill="#e2e2e2"/><rect x="6" y="4" width="2" height="2" fill="#e2e2e2"/><rect x="8" y="4" width="2" height="2" fill="#e2e2e2"/><rect x="4" y="6" width="2" height="2" fill="#e2e2e2"/><rect x="8" y="6" width="2" height="2" fill="#e2e2e2"/><rect x="10" y="6" width="2" height="2" fill="#e2e2e2"/><rect x="0" y="8" width="2" height="2" fill="#e2e2e2"/><rect x="2" y="8" width="2" height="2" fill="#e2e2e2"/><rect x="6" y="8" width="2" height="2" fill="#e2e2e2"/><rect x="10" y="8" width="2" height="2" fill="#e2e2e2"/><rect x="2" y="10" width="2" height="2" fill="#e2e2e2"/><rect x="4" y="10" width="2" height="2" fill="#e2e2e2"/><rect x="8" y="10" width="2" height="2" fill="#e2e2e2"/></svg>
<span class="t" style="left:195.5px;top:513.5px;font-size:12px;color:#e2e2e2;line-height:20px;letter-spacing:-0.19px;">Simplex Noise</span>
<svg class="a" style="left:359.5px;top:520.75px;" width="8" height="4.5" viewBox="0 0 8 4.5"><path d="M0 0 L4.0 4.5 L8 0" fill="none" stroke="#cfcfcf" stroke-width="1"/></svg>
<div class="a" style="left:22px;top:531.2px;width:255px;height:50.3px;border:3px solid #b5e61d;"></div>
<svg class="a" style="left:30px;top:540px;" width="10" height="10" viewBox="0 0 10 10"><circle cx="5" cy="5" r="4" fill="none" stroke="#7a7a7a" stroke-width="1.1"/></svg>
<span class="t" style="left:46.0px;top:535.5px;font-size:12px;color:#e2e2e2;line-height:20px;letter-spacing:0.18px;">Minimum</span>
<div class="a" style="left:177px;top:537px;width:94px;height:16px;background:#292929;border-radius:3px;"></div>
<span class="t" style="left:181.8px;top:535.5px;font-size:12px;color:#5e5e5e;line-height:20px;letter-spacing:0.28px;">#</span>
<span class="t" style="left:194.0px;top:535.5px;font-size:12px;color:#e6e6e6;line-height:20px;letter-spacing:0.02px;">-224.0</span>
<svg class="a" style="left:30px;top:562px;" width="10" height="10" viewBox="0 0 10 10"><circle cx="5" cy="5" r="4" fill="none" stroke="#7a7a7a" stroke-width="1.1"/></svg>
<span class="t" style="left:46.0px;top:557.5px;font-size:12px;color:#e2e2e2;line-height:20px;letter-spacing:0.03px;">Maximum</span>
<div class="a" style="left:177px;top:559px;width:94px;height:16px;background:#292929;border-radius:3px;"></div>
<span class="t" style="left:181.8px;top:557.5px;font-size:12px;color:#5e5e5e;line-height:20px;letter-spacing:0.28px;">#</span>
<span class="t" style="left:194.0px;top:557.5px;font-size:12px;color:#e6e6e6;line-height:20px;letter-spacing:-0.07px;">230.0</span>
<svg class="a" style="left:30px;top:584px;" width="10" height="10" viewBox="0 0 10 10"><circle cx="5" cy="5" r="4" fill="none" stroke="#7a7a7a" stroke-width="1.1"/></svg>
<span class="t" style="left:46.0px;top:579.5px;font-size:12px;color:#e2e2e2;line-height:20px;letter-spacing:0.26px;">Offset</span>
<div class="a" style="left:177px;top:581px;width:94px;height:16px;background:#292929;border-radius:3px;"></div>
<span class="t" style="left:181.8px;top:579.5px;font-size:12px;color:#5e5e5e;line-height:20px;letter-spacing:0.28px;">#</span>
<span class="t" style="left:194.0px;top:579.5px;font-size:12px;color:#e6e6e6;line-height:20px;letter-spacing:-0.13px;">0.0</span>
<svg class="a" style="left:30px;top:606px;" width="10" height="10" viewBox="0 0 10 10"><circle cx="5" cy="5" r="4" fill="none" stroke="#7a7a7a" stroke-width="1.1"/></svg>
<span class="t" style="left:46.0px;top:601.5px;font-size:12px;color:#e2e2e2;line-height:20px;letter-spacing:-0.18px;">Frequency</span>
<div class="a" style="left:177px;top:603px;width:94px;height:16px;background:#292929;border-radius:3px;"></div>
<span class="t" style="left:181.8px;top:601.5px;font-size:12px;color:#5e5e5e;line-height:20px;letter-spacing:0.28px;">#</span>
<span class="t" style="left:194.0px;top:601.5px;font-size:12px;color:#e6e6e6;line-height:20px;letter-spacing:-0.13px;">1.0</span>
<svg class="a" style="left:30px;top:628px;" width="10" height="10" viewBox="0 0 10 10"><circle cx="5" cy="5" r="4" fill="none" stroke="#7a7a7a" stroke-width="1.1"/></svg>
<span class="t" style="left:46.0px;top:623.5px;font-size:12px;color:#e2e2e2;line-height:20px;letter-spacing:-0.29px;">Separate Channels</span>
<div class="a" style="left:177px;top:625px;width:16px;height:16px;background:#2b2b2b;border-radius:3px;"></div>
<svg class="a" style="left:177px;top:625px;" width="16" height="16" viewBox="0 0 16 16"><path d="M3 8.6 L6.3 12 L13 3.6" fill="none" stroke="#2ecc71" stroke-width="2.2"/></svg>
<svg class="a" style="left:30px;top:650px;" width="10" height="10" viewBox="0 0 10 10"><circle cx="5" cy="5" r="4" fill="none" stroke="#7a7a7a" stroke-width="1.1"/></svg>
<span class="t" style="left:46.0px;top:645.5px;font-size:12px;color:#e2e2e2;line-height:20px;letter-spacing:-0.53px;">Seed</span>
<div class="a" style="left:177px;top:647px;width:94px;height:16px;background:#292929;border-radius:3px;"></div>
<span class="t" style="left:181.8px;top:645.5px;font-size:12px;color:#5e5e5e;line-height:20px;letter-spacing:0.28px;">#</span>
<span class="t" style="left:194.0px;top:645.5px;font-size:12px;color:#e6e6e6;line-height:20px;">0</span>
<svg class="a" style="left:30px;top:672px;" width="10" height="10" viewBox="0 0 10 10"><circle cx="5" cy="5" r="4" fill="none" stroke="#7a7a7a" stroke-width="1.1"/></svg>
<span class="t" style="left:46.0px;top:667.5px;font-size:12px;color:#e2e2e2;line-height:20px;letter-spacing:-0.42px;">Use Layer as Seed</span>
<div class="a" style="left:177px;top:669px;width:16px;height:16px;background:#2b2b2b;border-radius:3px;"></div>
<svg class="a" style="left:30px;top:694px;" width="10" height="10" viewBox="0 0 10 10"><circle cx="5" cy="5" r="4" fill="none" stroke="#7a7a7a" stroke-width="1.1"/></svg>
<span class="t" style="left:46.0px;top:689.5px;font-size:12px;color:#e2e2e2;line-height:20px;letter-spacing:-0.35px;">Stagger</span>
<div class="a" style="left:177px;top:691px;width:94px;height:16px;background:#292929;border-radius:3px;"></div>
<span class="t" style="left:181.8px;top:689.5px;font-size:12px;color:#5e5e5e;line-height:20px;letter-spacing:0.28px;">#</span>
<span class="t" style="left:194.0px;top:689.5px;font-size:12px;color:#e6e6e6;line-height:20px;letter-spacing:-0.05px;">50000.0</span>
<svg class="a" style="left:30px;top:716px;" width="10" height="10" viewBox="0 0 10 10"><circle cx="5" cy="5" r="4" fill="none" stroke="#7a7a7a" stroke-width="1.1"/></svg>
<span class="t" style="left:46.0px;top:711.5px;font-size:12px;color:#e2e2e2;line-height:20px;letter-spacing:-0.12px;">Looping</span>
<div class="a" style="left:177px;top:713px;width:16px;height:16px;background:#2b2b2b;border-radius:3px;"></div>
<svg class="a" style="left:30px;top:738px;" width="10" height="10" viewBox="0 0 10 10"><circle cx="5" cy="5" r="4" fill="none" stroke="#7a7a7a" stroke-width="1.1"/></svg>
<span class="t" style="left:46.0px;top:733.5px;font-size:12px;color:#8f8f8f;line-height:20px;letter-spacing:-0.14px;">Loop Length</span>
<div class="a" style="left:177px;top:735px;width:94px;height:16px;background:#292929;border-radius:3px;"></div>
<span class="t" style="left:181.8px;top:733.5px;font-size:12px;color:#4e4e4e;line-height:20px;letter-spacing:-0.55px;">F</span>
<span class="t" style="left:194.0px;top:733.5px;font-size:12px;color:#9a9a9a;line-height:20px;letter-spacing:-0.07px;">250.0</span>
<svg class="a" style="left:30px;top:760px;" width="10" height="10" viewBox="0 0 10 10"><circle cx="5" cy="5" r="4" fill="none" stroke="#7a7a7a" stroke-width="1.1"/></svg>
<span class="t" style="left:46.0px;top:755.5px;font-size:12px;color:#e2e2e2;line-height:20px;letter-spacing:-0.02px;">Time</span>
<div class="a" style="left:177px;top:757px;width:84px;height:16px;background:#292929;border-radius:3px;"></div>
<span class="t" style="left:181.0px;top:755.5px;font-size:12px;color:#5e5e5e;line-height:20px;letter-spacing:0.28px;">#</span>
<span class="t" style="left:194.0px;top:755.5px;font-size:12px;color:#e6d27a;line-height:20px;letter-spacing:-0.07px;">104.0</span>
<svg class="a" style="left:250.8px;top:761.8px;" width="6.6" height="6.6" viewBox="0 0 6.6 6.6"><path d="M6.5 0H3.4L0.1 3.3L3.4 6.6H6.5Z" fill="#e0cc6a"/></svg>
<svg class="a" style="left:263px;top:761.8px;" width="6.6" height="6.6" viewBox="0 0 6.6 6.6"><path d="M0.1 0H3.2L6.5 3.3L3.2 6.6H0.1Z" fill="#858585"/></svg>
<div class="a" style="left:273.2px;top:757.4px;width:15.4px;height:15.2px;background:#2b2b2b;border-radius:4px;border:1px solid #222;"></div>
<svg class="a" style="left:277.5px;top:761.5px;" width="7" height="7" viewBox="0 0 7 7"><path d="M0 0L7 7M7 0L0 7" stroke="#d0d0d0" stroke-width="1.1"/></svg>
<svg class="a" style="left:30px;top:782px;" width="10" height="10" viewBox="0 0 10 10"><circle cx="5" cy="5" r="4" fill="none" stroke="#7a7a7a" stroke-width="1.1"/></svg>
<span class="t" style="left:46.0px;top:777.5px;font-size:12px;color:#e2e2e2;line-height:20px;letter-spacing:-0.3px;">Time Scale</span>
<div class="a" style="left:177px;top:779px;width:94px;height:16px;background:#292929;border-radius:3px;"></div>
<span class="t" style="left:181.8px;top:777.5px;font-size:12px;color:#5e5e5e;line-height:20px;letter-spacing:0.28px;">#</span>
<span class="t" style="left:194.0px;top:777.5px;font-size:12px;color:#e6e6e6;line-height:20px;letter-spacing:-0.13px;">1.0</span>
<svg class="a" style="left:30px;top:804px;" width="10" height="10" viewBox="0 0 10 10"><circle cx="5" cy="5" r="4" fill="none" stroke="#7a7a7a" stroke-width="1.1"/></svg>
<span class="t" style="left:46.0px;top:799.5px;font-size:12px;color:#e2e2e2;line-height:20px;letter-spacing:-0.06px;">Noise Position</span>
<div class="a" style="left:177px;top:801px;width:94px;height:16px;background:#292929;border-radius:3px;"></div>
<span class="t" style="left:181.8px;top:799.5px;font-size:12px;color:#777;line-height:20px;letter-spacing:-0.22px;">X</span>
<span class="t" style="left:194.0px;top:799.5px;font-size:12px;color:#e6e6e6;line-height:20px;letter-spacing:-0.13px;">0.0</span>
<div class="a" style="left:277px;top:801px;width:94px;height:16px;background:#292929;border-radius:3px;"></div>
<span class="t" style="left:281.8px;top:799.5px;font-size:12px;color:#777;line-height:20px;letter-spacing:-0.52px;">Y</span>
<span class="t" style="left:294.0px;top:799.5px;font-size:12px;color:#e6e6e6;line-height:20px;letter-spacing:-0.13px;">0.0</span>
<svg class="a" style="left:30px;top:826px;" width="10" height="10" viewBox="0 0 10 10"><circle cx="5" cy="5" r="4" fill="none" stroke="#7a7a7a" stroke-width="1.1"/></svg>
<span class="t" style="left:46.0px;top:821.5px;font-size:12px;color:#e2e2e2;line-height:20px;letter-spacing:-0.04px;">Noise Rotation</span>
<div class="a" style="left:177px;top:823px;width:94px;height:16px;background:#292929;border-radius:3px;"></div>
<span class="t" style="left:181.8px;top:821.5px;font-size:12px;color:#5e5e5e;line-height:20px;letter-spacing:0.28px;">#</span>
<span class="t" style="left:194.0px;top:821.5px;font-size:12px;color:#e6e6e6;line-height:20px;letter-spacing:-0.13px;">0.0</span>
<svg class="a" style="left:30px;top:848px;" width="10" height="10" viewBox="0 0 10 10"><circle cx="5" cy="5" r="4" fill="none" stroke="#7a7a7a" stroke-width="1.1"/></svg>
<span class="t" style="left:46.0px;top:843.5px;font-size:12px;color:#e2e2e2;line-height:20px;letter-spacing:-0.31px;">Noise Scale</span>
<div class="a" style="left:177px;top:845px;width:94px;height:16px;background:#292929;border-radius:3px;"></div>
<span class="t" style="left:181.8px;top:843.5px;font-size:12px;color:#777;line-height:20px;letter-spacing:-0.22px;">X</span>
<span class="t" style="left:194.0px;top:843.5px;font-size:12px;color:#e6e6e6;line-height:20px;letter-spacing:-0.13px;">1.0</span>
<div class="a" style="left:277px;top:845px;width:94px;height:16px;background:#292929;border-radius:3px;"></div>
<span class="t" style="left:281.8px;top:843.5px;font-size:12px;color:#777;line-height:20px;letter-spacing:-0.52px;">Y</span>
<span class="t" style="left:294.0px;top:843.5px;font-size:12px;color:#e6e6e6;line-height:20px;letter-spacing:-0.13px;">1.0</span>
<svg class="a" style="left:30px;top:870px;" width="10" height="10" viewBox="0 0 10 10"><circle cx="5" cy="5" r="4" fill="none" stroke="#7a7a7a" stroke-width="1.1"/></svg>
<span class="t" style="left:46.0px;top:865.5px;font-size:12px;color:#e2e2e2;line-height:20px;letter-spacing:-0.05px;">Use Position Context</span>
<div class="a" style="left:177px;top:867px;width:16px;height:16px;background:#2b2b2b;border-radius:3px;"></div>
<svg class="a" style="left:177px;top:867px;" width="16" height="16" viewBox="0 0 16 16"><path d="M3 8.6 L6.3 12 L13 3.6" fill="none" stroke="#2ecc71" stroke-width="2.2"/></svg>
<svg class="a" style="left:30px;top:892px;" width="10" height="10" viewBox="0 0 10 10"><circle cx="5" cy="5" r="4" fill="none" stroke="#7a7a7a" stroke-width="1.1"/></svg>
<span class="t" style="left:46.0px;top:887.5px;font-size:12px;color:#e2e2e2;line-height:20px;letter-spacing:-0.08px;">Use Index Context</span>
<div class="a" style="left:177px;top:889px;width:16px;height:16px;background:#2b2b2b;border-radius:3px;"></div>
<svg class="a" style="left:177px;top:889px;" width="16" height="16" viewBox="0 0 16 16"><path d="M3 8.6 L6.3 12 L13 3.6" fill="none" stroke="#2ecc71" stroke-width="2.2"/></svg>
<svg class="a" style="left:30px;top:914px;" width="10" height="10" viewBox="0 0 10 10"><circle cx="5" cy="5" r="4" fill="none" stroke="#7a7a7a" stroke-width="1.1"/></svg>
<span class="t" style="left:46.0px;top:909.5px;font-size:12px;color:#e2e2e2;line-height:20px;letter-spacing:-0.15px;">Octaves</span>
<div class="a" style="left:177px;top:911px;width:94px;height:16px;background:#292929;border-radius:3px;"></div>
<span class="t" style="left:181.8px;top:909.5px;font-size:12px;color:#5e5e5e;line-height:20px;letter-spacing:0.28px;">#</span>
<span class="t" style="left:194.0px;top:909.5px;font-size:12px;color:#e6e6e6;line-height:20px;">1</span>
<svg class="a" style="left:30px;top:936px;" width="10" height="10" viewBox="0 0 10 10"><circle cx="5" cy="5" r="4" fill="none" stroke="#7a7a7a" stroke-width="1.1"/></svg>
<span class="t" style="left:46.0px;top:931.5px;font-size:12px;color:#8f8f8f;line-height:20px;letter-spacing:-0.04px;">Lacunarity</span>
<div class="a" style="left:177px;top:933px;width:94px;height:16px;background:#292929;border-radius:3px;"></div>
<span class="t" style="left:181.8px;top:931.5px;font-size:12px;color:#4e4e4e;line-height:20px;letter-spacing:0.28px;">#</span>
<span class="t" style="left:194.0px;top:931.5px;font-size:12px;color:#9a9a9a;line-height:20px;letter-spacing:-0.13px;">2.0</span>
<svg class="a" style="left:30px;top:958px;" width="10" height="10" viewBox="0 0 10 10"><circle cx="5" cy="5" r="4" fill="none" stroke="#7a7a7a" stroke-width="1.1"/></svg>
<span class="t" style="left:46.0px;top:953.5px;font-size:12px;color:#8f8f8f;line-height:20px;letter-spacing:-0.27px;">Gain</span>
<div class="a" style="left:177px;top:955px;width:94px;height:16px;background:#292929;border-radius:3px;"></div>
<span class="t" style="left:181.8px;top:953.5px;font-size:12px;color:#4e4e4e;line-height:20px;letter-spacing:0.28px;">#</span>
<span class="t" style="left:194.0px;top:953.5px;font-size:12px;color:#9a9a9a;line-height:20px;letter-spacing:-0.13px;">0.5</span>
<svg class="a" style="left:30px;top:980px;" width="10" height="10" viewBox="0 0 10 10"><circle cx="5" cy="5" r="4" fill="none" stroke="#7a7a7a" stroke-width="1.1"/></svg>
<span class="t" style="left:46.0px;top:975.5px;font-size:12px;color:#e2e2e2;line-height:20px;letter-spacing:-0.1px;">Curl Noise</span>
<div class="a" style="left:177px;top:977px;width:16px;height:16px;background:#2b2b2b;border-radius:3px;"></div>
<svg class="a" style="left:30px;top:1002px;" width="10" height="10" viewBox="0 0 10 10"><circle cx="5" cy="5" r="4" fill="none" stroke="#7a7a7a" stroke-width="1.1"/></svg>
<span class="t" style="left:46.0px;top:997.5px;font-size:12px;color:#8f8f8f;line-height:20px;letter-spacing:0.08px;">Curl Amount</span>
<div class="a" style="left:177px;top:999px;width:94px;height:16px;background:#292929;border-radius:3px;"></div>
<span class="t" style="left:181.8px;top:997.5px;font-size:12px;color:#4e4e4e;line-height:20px;letter-spacing:0.28px;">#</span>
<span class="t" style="left:194.0px;top:997.5px;font-size:12px;color:#9a9a9a;line-height:20px;letter-spacing:-0.09px;">50.0</span>
<div class="a" style="left:494px;top:85px;width:30px;height:535px;background:#444444;"></div>
<div class="a" style="left:503px;top:89px;width:2px;height:1.5px;background:#8a8a8a;"></div>
<div class="a" style="left:508px;top:89px;width:2px;height:1.5px;background:#8a8a8a;"></div>
<div class="a" style="left:513px;top:89px;width:2px;height:1.5px;background:#8a8a8a;"></div>
<div class="a" style="left:495px;top:96px;width:28px;height:28px;background:#1a1a1a;border-radius:4px;"></div>
<svg class="a" width="0" height="0" style="left:0;top:0"><defs><linearGradient id="tg" x1="0" y1="0" x2="0" y2="1"><stop offset="0" stop-color="#f4f4f4"/><stop offset="1" stop-color="#c4c4c4"/></linearGradient></defs></svg>
<svg class="a" style="left:498.0px;top:99.0px;" width="22" height="22" viewBox="0 0 22 22"><path d="M6.4 1.4 V17.2 L9.9 14.2 L12.1 18.9 L15 17.5 L13.1 13.2 L17.6 12.3 Z" fill="none" stroke="#2ecc71" stroke-width="1.3" stroke-linejoin="miter"/></svg>
<svg class="a" style="left:498.0px;top:129.0px;" width="22" height="22" viewBox="0 0 22 22"><path d="M6 0.7 V20.9 L11.3 15.4 L20.1 13.7 Z" fill="url(#tg)"/></svg>
<svg class="a" style="left:498.0px;top:159.0px;" width="22" height="22" viewBox="0 0 22 22"><g transform="rotate(-45 11 11)"><path d="M11 0 L15.6 8.6 L13.6 14.6 H8.4 L6.4 8.6 Z" fill="url(#tg)"/><path d="M11 1V8.6" stroke="#444" stroke-width="0.9"/><circle cx="11" cy="9.4" r="1.4" fill="#444"/><rect x="7.6" y="16" width="6.8" height="3.2" fill="url(#tg)"/></g></svg>
<svg class="a" style="left:498.0px;top:189.0px;" width="22" height="22" viewBox="0 0 22 22"><g transform="rotate(45 11 11)"><rect x="8.8" y="-0.5" width="4.4" height="16.5" fill="url(#tg)"/><path d="M8.8 17H13.2L11 22.5Z" fill="url(#tg)"/><path d="M8.8 -1.5 Q11 -4.5 13.2 -1.5Z" fill="url(#tg)"/></g></svg>
<svg class="a" style="left:498.0px;top:219.0px;" width="22" height="22" viewBox="0 0 22 22"><rect x="1" y="6.5" width="13.5" height="11" rx="1.5" fill="url(#tg)"/><path d="M15 12 L21.5 7 V17 Z" fill="url(#tg)"/><rect x="2" y="3.5" width="8" height="2" fill="url(#tg)"/><circle cx="4.5" cy="10" r="1.4" fill="#444"/></svg>
<svg class="a" style="left:498.0px;top:249.0px;" width="22" height="22" viewBox="0 0 22 22"><path d="M2.5 19.5 L19.5 2.5" stroke="#d8d8d8" stroke-width="1.2"/></svg>
<svg class="a" style="left:498.0px;top:279.0px;" width="22" height="22" viewBox="0 0 22 22"><path d="M3.5 3H18.5V6.6H13V19.5H9V6.6H3.5Z" fill="url(#tg)"/></svg>
<svg class="a" style="left:498.0px;top:309.0px;" width="22" height="22" viewBox="0 0 22 22"><path d="M2.9 2.6 V13.6 L6 10.6 L11.2 9.8 Z" fill="url(#tg)"/><path d="M5 3.4 L16.1 3 L18.9 18.7 H2.9 V14.5" fill="none" stroke="#d4d4d4" stroke-width="1"/><g fill="#e2e2e2"><rect x="15" y="1.9" width="2.2" height="2.2"/><rect x="17.8" y="17.6" width="2.2" height="2.2"/><rect x="1.8" y="17.6" width="2.2" height="2.2"/></g></svg>
<svg class="a" style="left:498.0px;top:339.0px;" width="22" height="22" viewBox="0 0 22 22"><rect x="3.5" y="3.5" width="15" height="15" fill="url(#tg)"/></svg>
<svg class="a" style="left:498.0px;top:369.0px;" width="22" height="22" viewBox="0 0 22 22"><circle cx="11" cy="11" r="8.2" fill="url(#tg)"/></svg>
<svg class="a" style="left:498.0px;top:399.0px;" width="22" height="22" viewBox="0 0 22 22"><path d="M11 2.5 L19.8 9 L16.5 19 H5.5 L2.2 9 Z" fill="url(#tg)"/></svg>
<svg class="a" style="left:498.0px;top:429.0px;" width="22" height="22" viewBox="0 0 22 22"><path d="M11 1.5 L13.4 8.4 L20.6 8.6 L14.9 13 L17 20 L11 15.9 L5 20 L7.1 13 L1.4 8.6 L8.6 8.4 Z" fill="url(#tg)"/></svg>
<svg class="a" style="left:498.0px;top:459.0px;" width="22" height="22" viewBox="0 0 22 22"><path d="M5.2 14.5 A7 7 0 1 1 13 17.8" fill="none" stroke="url(#tg)" stroke-width="3.4"/></svg>
<svg class="a" style="left:498.0px;top:489.0px;" width="22" height="22" viewBox="0 0 22 22"><path d="M11 1.5 Q12.3 9.7 20.5 11 Q12.3 12.3 11 20.5 Q9.7 12.3 1.5 11 Q9.7 9.7 11 1.5Z" fill="url(#tg)"/></svg>
<svg class="a" style="left:498.0px;top:519.0px;" width="22" height="22" viewBox="0 0 22 22"><rect x="9.3" y="1.2" width="3.4" height="5" rx="0.6" fill="url(#tg)" transform="rotate(0 11 11)"/><rect x="9.3" y="1.2" width="3.4" height="5" rx="0.6" fill="url(#tg)" transform="rotate(45 11 11)"/><rect x="9.3" y="1.2" width="3.4" height="5" rx="0.6" fill="url(#tg)" transform="rotate(90 11 11)"/><rect x="9.3" y="1.2" width="3.4" height="5" rx="0.6" fill="url(#tg)" transform="rotate(135 11 11)"/><rect x="9.3" y="1.2" width="3.4" height="5" rx="0.6" fill="url(#tg)" transform="rotate(180 11 11)"/><rect x="9.3" y="1.2" width="3.4" height="5" rx="0.6" fill="url(#tg)" transform="rotate(225 11 11)"/><rect x="9.3" y="1.2" width="3.4" height="5" rx="0.6" fill="url(#tg)" transform="rotate(270 11 11)"/><rect x="9.3" y="1.2" width="3.4" height="5" rx="0.6" fill="url(#tg)" transform="rotate(315 11 11)"/><circle cx="11" cy="11" r="5.2" fill="none" stroke="url(#tg)" stroke-width="3.4"/></svg>
<svg class="a" style="left:498.0px;top:549.0px;" width="22" height="22" viewBox="0 0 22 22"><path d="M1 11 L6.5 5.5 V9.2 H15.5 V5.5 L21 11 L15.5 16.5 V12.8 H6.5 V16.5 Z" fill="url(#tg)"/></svg>
<svg class="a" style="left:503px;top:605.8px;" width="13" height="10" viewBox="0 0 13 10"><path d="M1 0.5L6 5L1 9.5M7 0.5L12 5L7 9.5" fill="none" stroke="#c0c0c0" stroke-width="1.2"/></svg>
<div class="a" style="left:530px;top:85px;width:1057px;height:22px;background:#1c1c1c;"></div>
<div class="a" style="left:530px;top:85px;width:96px;height:22px;background:#444;border-radius:4px 4px 0 0;"></div>
<span class="t" style="left:535.0px;top:86.5px;font-size:12px;color:#e2e2e2;line-height:20px;letter-spacing:0.02px;">duplicator blend</span>
<div class="a" style="left:530px;top:107px;width:1057px;height:513px;background:#474747;"></div>
<div class="a" style="left:550px;top:127px;width:1037px;height:471px;background:#000;"></div>
<div class="a" style="left:681px;top:155px;width:756px;height:425px;background:#1b1b1b;"></div>
<svg class="a" style="left:0;top:107px" width="1587" height="20"><rect x="562.15" y="16" width="1" height="4" fill="#9a9a9a"/><rect x="573.97" y="16" width="1" height="4" fill="#9a9a9a"/><rect x="585.80" y="13" width="1" height="7" fill="#959595"/><rect x="597.62" y="16" width="1" height="4" fill="#9a9a9a"/><rect x="609.45" y="16" width="1" height="4" fill="#9a9a9a"/><rect x="621.27" y="16" width="1" height="4" fill="#9a9a9a"/><rect x="633.10" y="16" width="1" height="4" fill="#9a9a9a"/><rect x="644.92" y="13" width="1" height="7" fill="#959595"/><rect x="656.75" y="16" width="1" height="4" fill="#9a9a9a"/><rect x="668.57" y="16" width="1" height="4" fill="#9a9a9a"/><rect x="680.40" y="16" width="1" height="4" fill="#9a9a9a"/><rect x="692.22" y="16" width="1" height="4" fill="#9a9a9a"/><rect x="704.05" y="13" width="1" height="7" fill="#959595"/><rect x="715.87" y="16" width="1" height="4" fill="#9a9a9a"/><rect x="727.70" y="16" width="1" height="4" fill="#9a9a9a"/><rect x="739.52" y="16" width="1" height="4" fill="#9a9a9a"/><rect x="751.35" y="16" width="1" height="4" fill="#9a9a9a"/><rect x="763.17" y="13" width="1" height="7" fill="#959595"/><rect x="775.00" y="16" width="1" height="4" fill="#9a9a9a"/><rect x="786.82" y="16" width="1" height="4" fill="#9a9a9a"/><rect x="798.65" y="16" width="1" height="4" fill="#9a9a9a"/><rect x="810.47" y="16" width="1" height="4" fill="#9a9a9a"/><rect x="822.30" y="13" width="1" height="7" fill="#959595"/><rect x="834.12" y="16" width="1" height="4" fill="#9a9a9a"/><rect x="845.95" y="16" width="1" height="4" fill="#9a9a9a"/><rect x="857.77" y="16" width="1" height="4" fill="#9a9a9a"/><rect x="869.60" y="16" width="1" height="4" fill="#9a9a9a"/><rect x="881.42" y="13" width="1" height="7" fill="#959595"/><rect x="893.25" y="16" width="1" height="4" fill="#9a9a9a"/><rect x="905.07" y="16" width="1" height="4" fill="#9a9a9a"/><rect x="916.90" y="16" width="1" height="4" fill="#9a9a9a"/><rect x="928.72" y="16" width="1" height="4" fill="#9a9a9a"/><rect x="940.55" y="13" width="1" height="7" fill="#959595"/><rect x="952.37" y="16" width="1" height="4" fill="#9a9a9a"/><rect x="964.20" y="16" width="1" height="4" fill="#9a9a9a"/><rect x="976.02" y="16" width="1" height="4" fill="#9a9a9a"/><rect x="987.85" y="16" width="1" height="4" fill="#9a9a9a"/><rect x="999.67" y="13" width="1" height="7" fill="#959595"/><rect x="1011.50" y="16" width="1" height="4" fill="#9a9a9a"/><rect x="1023.32" y="16" width="1" height="4" fill="#9a9a9a"/><rect x="1035.15" y="16" width="1" height="4" fill="#9a9a9a"/><rect x="1046.97" y="16" width="1" height="4" fill="#9a9a9a"/><rect x="1058.80" y="13" width="1" height="7" fill="#959595"/><rect x="1070.63" y="16" width="1" height="4" fill="#9a9a9a"/><rect x="1082.45" y="16" width="1" height="4" fill="#9a9a9a"/><rect x="1094.28" y="16" width="1" height="4" fill="#9a9a9a"/><rect x="1106.10" y="16" width="1" height="4" fill="#9a9a9a"/><rect x="1117.93" y="13" width="1" height="7" fill="#959595"/><rect x="1129.75" y="16" width="1" height="4" fill="#9a9a9a"/><rect x="1141.58" y="16" width="1" height="4" fill="#9a9a9a"/><rect x="1153.40" y="16" width="1" height="4" fill="#9a9a9a"/><rect x="1165.23" y="16" width="1" height="4" fill="#9a9a9a"/><rect x="1177.05" y="13" width="1" height="7" fill="#959595"/><rect x="1188.88" y="16" width="1" height="4" fill="#9a9a9a"/><rect x="1200.70" y="16" width="1" height="4" fill="#9a9a9a"/><rect x="1212.53" y="16" width="1" height="4" fill="#9a9a9a"/><rect x="1224.35" y="16" width="1" height="4" fill="#9a9a9a"/><rect x="1236.18" y="13" width="1" height="7" fill="#959595"/><rect x="1248.00" y="16" width="1" height="4" fill="#9a9a9a"/><rect x="1259.83" y="16" width="1" height="4" fill="#9a9a9a"/><rect x="1271.65" y="16" width="1" height="4" fill="#9a9a9a"/><rect x="1283.48" y="16" width="1" height="4" fill="#9a9a9a"/><rect x="1295.30" y="13" width="1" height="7" fill="#959595"/><rect x="1307.13" y="16" width="1" height="4" fill="#9a9a9a"/><rect x="1318.95" y="16" width="1" height="4" fill="#9a9a9a"/><rect x="1330.78" y="16" width="1" height="4" fill="#9a9a9a"/><rect x="1342.60" y="16" width="1" height="4" fill="#9a9a9a"/><rect x="1354.43" y="13" width="1" height="7" fill="#959595"/><rect x="1366.25" y="16" width="1" height="4" fill="#9a9a9a"/><rect x="1378.08" y="16" width="1" height="4" fill="#9a9a9a"/><rect x="1389.90" y="16" width="1" height="4" fill="#9a9a9a"/><rect x="1401.73" y="16" width="1" height="4" fill="#9a9a9a"/><rect x="1413.55" y="13" width="1" height="7" fill="#959595"/><rect x="1425.38" y="16" width="1" height="4" fill="#9a9a9a"/><rect x="1437.20" y="16" width="1" height="4" fill="#9a9a9a"/><rect x="1449.03" y="16" width="1" height="4" fill="#9a9a9a"/><rect x="1460.85" y="16" width="1" height="4" fill="#9a9a9a"/><rect x="1472.68" y="13" width="1" height="7" fill="#959595"/><rect x="1484.50" y="16" width="1" height="4" fill="#9a9a9a"/><rect x="1496.33" y="16" width="1" height="4" fill="#9a9a9a"/><rect x="1508.15" y="16" width="1" height="4" fill="#9a9a9a"/><rect x="1519.98" y="16" width="1" height="4" fill="#9a9a9a"/><rect x="1531.80" y="13" width="1" height="7" fill="#959595"/><rect x="1543.63" y="16" width="1" height="4" fill="#9a9a9a"/><rect x="1555.45" y="16" width="1" height="4" fill="#9a9a9a"/><rect x="1567.28" y="16" width="1" height="4" fill="#9a9a9a"/><rect x="1579.10" y="16" width="1" height="4" fill="#9a9a9a"/></svg>
<span class="t" style="left:573.3px;top:108.5px;font-size:10px;color:#c4c4c4;line-height:12px;letter-spacing:0.09px;">-1200</span>
<span class="t" style="left:632.4px;top:108.5px;font-size:10px;color:#c4c4c4;line-height:12px;letter-spacing:0.09px;">-1050</span>
<span class="t" style="left:694.3px;top:108.5px;font-size:10px;color:#c4c4c4;line-height:12px;letter-spacing:0.12px;">-900</span>
<span class="t" style="left:753.4px;top:108.5px;font-size:10px;color:#c4c4c4;line-height:12px;letter-spacing:0.12px;">-750</span>
<span class="t" style="left:812.6px;top:108.5px;font-size:10px;color:#c4c4c4;line-height:12px;letter-spacing:0.12px;">-600</span>
<span class="t" style="left:871.7px;top:108.5px;font-size:10px;color:#c4c4c4;line-height:12px;letter-spacing:0.12px;">-450</span>
<span class="t" style="left:930.8px;top:108.5px;font-size:10px;color:#c4c4c4;line-height:12px;letter-spacing:0.12px;">-300</span>
<span class="t" style="left:989.9px;top:108.5px;font-size:10px;color:#c4c4c4;line-height:12px;letter-spacing:0.12px;">-150</span>
<span class="t" style="left:1056.5px;top:108.5px;font-size:10px;color:#c4c4c4;line-height:12px;">0</span>
<span class="t" style="left:1110.1px;top:108.5px;font-size:10px;color:#c4c4c4;line-height:12px;">150</span>
<span class="t" style="left:1169.2px;top:108.5px;font-size:10px;color:#c4c4c4;line-height:12px;">300</span>
<span class="t" style="left:1228.3px;top:108.5px;font-size:10px;color:#c4c4c4;line-height:12px;">450</span>
<span class="t" style="left:1287.5px;top:108.5px;font-size:10px;color:#c4c4c4;line-height:12px;">600</span>
<span class="t" style="left:1346.6px;top:108.5px;font-size:10px;color:#c4c4c4;line-height:12px;">750</span>
<span class="t" style="left:1405.7px;top:108.5px;font-size:10px;color:#c4c4c4;line-height:12px;">900</span>
<span class="t" style="left:1462.1px;top:108.5px;font-size:10px;color:#c4c4c4;line-height:12px;">1050</span>
<span class="t" style="left:1521.2px;top:108.5px;font-size:10px;color:#c4c4c4;line-height:12px;">1200</span>
<span class="t" style="left:535.5px;top:111.5px;font-size:10px;color:#c4c4c4;line-height:12px;letter-spacing:-0.09px;">px</span>
<svg class="a" style="left:530px;top:0" width="20" height="600"><rect x="16.3" y="592.18" width="3.7" height="1" fill="#9a9a9a"/><rect x="16.3" y="580.35" width="3.7" height="1" fill="#9a9a9a"/><rect x="16.3" y="568.53" width="3.7" height="1" fill="#9a9a9a"/><rect x="16.3" y="556.70" width="3.7" height="1" fill="#9a9a9a"/><rect x="13.3" y="544.88" width="6.7" height="1" fill="#959595"/><rect x="16.3" y="533.05" width="3.7" height="1" fill="#9a9a9a"/><rect x="16.3" y="521.23" width="3.7" height="1" fill="#9a9a9a"/><rect x="16.3" y="509.40" width="3.7" height="1" fill="#9a9a9a"/><rect x="16.3" y="497.58" width="3.7" height="1" fill="#9a9a9a"/><rect x="13.3" y="485.75" width="6.7" height="1" fill="#959595"/><rect x="16.3" y="473.93" width="3.7" height="1" fill="#9a9a9a"/><rect x="16.3" y="462.10" width="3.7" height="1" fill="#9a9a9a"/><rect x="16.3" y="450.28" width="3.7" height="1" fill="#9a9a9a"/><rect x="16.3" y="438.45" width="3.7" height="1" fill="#9a9a9a"/><rect x="13.3" y="426.63" width="6.7" height="1" fill="#959595"/><rect x="16.3" y="414.80" width="3.7" height="1" fill="#9a9a9a"/><rect x="16.3" y="402.98" width="3.7" height="1" fill="#9a9a9a"/><rect x="16.3" y="391.15" width="3.7" height="1" fill="#9a9a9a"/><rect x="16.3" y="379.33" width="3.7" height="1" fill="#9a9a9a"/><rect x="13.3" y="367.50" width="6.7" height="1" fill="#959595"/><rect x="16.3" y="355.67" width="3.7" height="1" fill="#9a9a9a"/><rect x="16.3" y="343.85" width="3.7" height="1" fill="#9a9a9a"/><rect x="16.3" y="332.02" width="3.7" height="1" fill="#9a9a9a"/><rect x="16.3" y="320.20" width="3.7" height="1" fill="#9a9a9a"/><rect x="13.3" y="308.37" width="6.7" height="1" fill="#959595"/><rect x="16.3" y="296.55" width="3.7" height="1" fill="#9a9a9a"/><rect x="16.3" y="284.72" width="3.7" height="1" fill="#9a9a9a"/><rect x="16.3" y="272.90" width="3.7" height="1" fill="#9a9a9a"/><rect x="16.3" y="261.07" width="3.7" height="1" fill="#9a9a9a"/><rect x="13.3" y="249.25" width="6.7" height="1" fill="#959595"/><rect x="16.3" y="237.42" width="3.7" height="1" fill="#9a9a9a"/><rect x="16.3" y="225.60" width="3.7" height="1" fill="#9a9a9a"/><rect x="16.3" y="213.77" width="3.7" height="1" fill="#9a9a9a"/><rect x="16.3" y="201.95" width="3.7" height="1" fill="#9a9a9a"/><rect x="13.3" y="190.12" width="6.7" height="1" fill="#959595"/><rect x="16.3" y="178.30" width="3.7" height="1" fill="#9a9a9a"/><rect x="16.3" y="166.47" width="3.7" height="1" fill="#9a9a9a"/><rect x="16.3" y="154.65" width="3.7" height="1" fill="#9a9a9a"/><rect x="16.3" y="142.82" width="3.7" height="1" fill="#9a9a9a"/><rect x="13.3" y="131.00" width="6.7" height="1" fill="#959595"/></svg>
<span class="t" style="left:537.5px;top:545.4px;font-size:10px;line-height:12px;color:#c4c4c4;letter-spacing:0.27px;transform:translate(-50%,-50%) rotate(-90deg);">-450</span>
<span class="t" style="left:537.5px;top:486.3px;font-size:10px;line-height:12px;color:#c4c4c4;letter-spacing:0.27px;transform:translate(-50%,-50%) rotate(-90deg);">-300</span>
<span class="t" style="left:537.5px;top:427.1px;font-size:10px;line-height:12px;color:#c4c4c4;letter-spacing:0.27px;transform:translate(-50%,-50%) rotate(-90deg);">-150</span>
<span class="t" style="left:537.5px;top:368.0px;font-size:10px;line-height:12px;color:#c4c4c4;letter-spacing:0.23px;transform:translate(-50%,-50%) rotate(-90deg);">0</span>
<span class="t" style="left:537.5px;top:308.9px;font-size:10px;line-height:12px;color:#c4c4c4;letter-spacing:0.23px;transform:translate(-50%,-50%) rotate(-90deg);">150</span>
<span class="t" style="left:537.5px;top:249.7px;font-size:10px;line-height:12px;color:#c4c4c4;letter-spacing:0.23px;transform:translate(-50%,-50%) rotate(-90deg);">300</span>
<span class="t" style="left:537.5px;top:190.6px;font-size:10px;line-height:12px;color:#c4c4c4;letter-spacing:0.23px;transform:translate(-50%,-50%) rotate(-90deg);">450</span>
<span class="t" style="left:537.5px;top:131.5px;font-size:10px;line-height:12px;color:#c4c4c4;letter-spacing:0.23px;transform:translate(-50%,-50%) rotate(-90deg);">600</span>
<span class="t" style="left:569.5px;top:500.5px;font-size:12px;color:#f2f2f2;line-height:14px;letter-spacing:-0.18px;">Hold S</span>
<span class="t" style="left:606.9px;top:500.5px;font-size:12px;color:#474747;line-height:14px;letter-spacing:-0.08px;">Direct Layer Selection</span>
<span class="t" style="left:569.5px;top:514.5px;font-size:12px;color:#f2f2f2;line-height:14px;letter-spacing:-0.59px;">Space</span>
<span class="t" style="left:603.1px;top:514.5px;font-size:12px;color:#474747;line-height:14px;letter-spacing:-0.06px;">Play/ Stop</span>
<span class="t" style="left:569.5px;top:528.5px;font-size:12px;color:#f2f2f2;line-height:14px;letter-spacing:-0.25px;">Space + click + drag</span>
<span class="t" style="left:675.7px;top:528.5px;font-size:12px;color:#474747;line-height:14px;letter-spacing:-0.55px;">Pan</span>
<span class="t" style="left:569.5px;top:542.5px;font-size:12px;color:#f2f2f2;line-height:14px;letter-spacing:-0.04px;">Alt + click + drag</span>
<span class="t" style="left:660.0px;top:542.5px;font-size:12px;color:#474747;line-height:14px;letter-spacing:0.04px;">Move Pivot Point</span>
<span class="t" style="left:569.5px;top:556.5px;font-size:12px;color:#f2f2f2;line-height:14px;letter-spacing:0.04px;">Shift</span>
<span class="t" style="left:596.2px;top:556.5px;font-size:12px;color:#474747;line-height:14px;letter-spacing:-0.31px;">Enable Snapping</span>
<span class="t" style="left:998.5px;top:576.5px;font-size:12px;color:#f2f2f2;line-height:14px;letter-spacing:0.13px;">Viewport Quality: High</span>
<div class="a" style="left:535px;top:601px;width:78px;height:16px;background:#303030;border-radius:3px;"></div>
<span class="t" style="left:539.0px;top:599.5px;font-size:12px;color:#e2e2e2;line-height:20px;letter-spacing:-0.37px;">39%</span>
<svg class="a" style="left:600.5px;top:607.25px;" width="8" height="4.5" viewBox="0 0 8 4.5"><path d="M0 0 L4.0 4.5 L8 0" fill="none" stroke="#c4c4c4" stroke-width="1"/></svg>
<div class="a" style="left:866.5px;top:600px;width:99.5px;height:18.7px;background:#2b2b2b;border-radius:4px;border:1px solid #303030;"></div>
<div class="a" style="left:885.5px;top:600.5px;width:1px;height:17.7px;background:#3a3a3a;"></div>
<div class="a" style="left:905.5px;top:600.5px;width:1px;height:17.7px;background:#3a3a3a;"></div>
<div class="a" style="left:925.5px;top:600.5px;width:1px;height:17.7px;background:#3a3a3a;"></div>
<div class="a" style="left:945.5px;top:600.5px;width:1px;height:17.7px;background:#3a3a3a;"></div>
<svg class="a" style="left:870px;top:604px;" width="12" height="10" viewBox="0 0 12 10"><rect x="0" y="0" width="2.2" height="10" fill="#c8c8c8"/><path d="M11 0V10L3 5Z" fill="#c8c8c8"/></svg>
<svg class="a" style="left:890px;top:604px;" width="12" height="10" viewBox="0 0 12 10"><path d="M8.5 0V10L0.2 5Z" fill="#c8c8c8"/><rect x="10" y="0" width="2.2" height="10" fill="#c8c8c8"/></svg>
<svg class="a" style="left:911px;top:604px;" width="10" height="10" viewBox="0 0 10 10"><path d="M0 0L9 5L0 10Z" fill="#c8c8c8"/></svg>
<svg class="a" style="left:929.8px;top:604px;" width="13" height="10" viewBox="0 0 13 10"><rect x="0" y="0" width="2.2" height="10" fill="#c8c8c8"/><path d="M4.2 0V10L12.4 5Z" fill="#c8c8c8"/></svg>
<svg class="a" style="left:950.8px;top:604px;" width="12" height="10" viewBox="0 0 12 10"><path d="M0 0V10L8.2 5Z" fill="#c8c8c8"/><rect x="9.2" y="0" width="2.2" height="10" fill="#c8c8c8"/></svg>
<div class="a" style="left:971.5px;top:600px;width:19px;height:18.7px;background:#2b2b2b;border-radius:4px;border:1px solid #303030;"></div>
<svg class="a" style="left:974px;top:602.5px;" width="15" height="12" viewBox="0 0 15 12"><path d="M7.5 3.8H1.5Q0.6 3.8 0.6 4.8V9.2Q0.6 10.2 1.5 10.2H12.5Q13.4 10.2 13.4 9.2V6.5" fill="none" stroke="#c8c8c8" stroke-width="1.2"/><path d="M7.2 0.3L14.3 3.3L7.2 6.6Z" fill="#c8c8c8"/></svg>
<div class="a" style="left:1232px;top:600px;width:37px;height:18px;background:#2b2b2b;border-radius:4px;"></div>
<svg class="a" style="left:1233.3px;top:604.8px;" width="14" height="8.5" viewBox="0 0 14 8.5"><path d="M3.8 0H13.5V8.5H3.8L0 4.25Z" fill="#dcdcdc"/><circle cx="4.6" cy="4.25" r="1.5" fill="#2b2b2b"/></svg>
<span class="t" style="left:1258.2px;top:599.5px;font-size:12px;color:#a9b4c6;line-height:20px;">0</span>
<div class="a" style="left:1272.3px;top:600px;width:30.7px;height:18.7px;background:#333333;border-radius:4px;"></div>
<div class="a" style="left:1272.3px;top:600px;width:19px;height:18.7px;background:#2b2b2b;border-radius:4px 0 0 4px;"></div>
<div class="a" style="left:1290.8px;top:600px;width:1px;height:18.7px;background:#3a3a3a;"></div>
<div class="a" style="left:1272.3px;top:600px;width:30.7px;height:18.7px;border-radius:4px;border:1px solid #323232;"></div>
<svg class="a" style="left:1294.3px;top:605.5px;" width="6" height="8" viewBox="0 0 6 8"><path d="M0.6 0.6V7.4L5.6 4Z" fill="none" stroke="#8a8a8a" stroke-width="1"/></svg>
<svg class="a" style="left:1275.5px;top:603px;" width="14" height="13" viewBox="0 0 14 13"><path d="M0.3 4.3H2.8L6.3 0.8V12.2L2.8 8.7H0.3Z" fill="#2ecc71"/><path d="M8.2 3.5Q10 6.5 8.2 9.5M10.4 1.6Q13.6 6.5 10.4 11.4" fill="none" stroke="#2ecc71" stroke-width="1.3"/></svg>
<div class="a" style="left:1307.3px;top:600px;width:30.9px;height:18.7px;background:#333333;border-radius:4px;"></div>
<div class="a" style="left:1307.3px;top:600px;width:19px;height:18.7px;background:#484848;border-radius:4px 0 0 4px;"></div>
<div class="a" style="left:1325.8px;top:600px;width:1px;height:18.7px;background:#3a3a3a;"></div>
<div class="a" style="left:1307.3px;top:600px;width:30.9px;height:18.7px;border-radius:4px;border:1px solid #323232;"></div>
<svg class="a" style="left:1329.3px;top:605.5px;" width="6" height="8" viewBox="0 0 6 8"><path d="M0.6 0.6V7.4L5.6 4Z" fill="none" stroke="#8a8a8a" stroke-width="1"/></svg>
<svg class="a" style="left:1310.5px;top:602.5px;" width="14" height="14" viewBox="0 0 14 14"><g transform="rotate(-35 7 7)"><path d="M3.2 12.5V6.2Q3.2 2.2 7 2.2Q10.8 2.2 10.8 6.2V12.5" fill="none" stroke="#e6e6e6" stroke-width="2.4"/><path d="M2 10.6H4.4M9.6 10.6H12" stroke="#484848" stroke-width="0.9"/></g></svg>
<div class="a" style="left:1342.6px;top:600px;width:30.4px;height:18.7px;background:#333333;border-radius:4px;"></div>
<div class="a" style="left:1342.6px;top:600px;width:19px;height:18.7px;background:#484848;border-radius:4px 0 0 4px;"></div>
<div class="a" style="left:1361.1px;top:600px;width:1px;height:18.7px;background:#3a3a3a;"></div>
<div class="a" style="left:1342.6px;top:600px;width:30.4px;height:18.7px;border-radius:4px;border:1px solid #323232;"></div>
<svg class="a" style="left:1364.6px;top:605.5px;" width="6" height="8" viewBox="0 0 6 8"><path d="M0.6 0.6V7.4L5.6 4Z" fill="none" stroke="#8a8a8a" stroke-width="1"/></svg>
<svg class="a" style="left:1345.5px;top:602.5px;" width="14" height="14" viewBox="0 0 14 14"><path d="M4.6 0V14M9.6 0V14M0 4.6H14M0 9.6H14" stroke="#e6e6e6" stroke-width="1.1"/></svg>
<div class="a" style="left:1377.3px;top:600px;width:19.7px;height:18.7px;background:#262626;border-radius:4px;"></div>
<svg class="a" style="left:1379.6px;top:604px;" width="15" height="11" viewBox="0 0 15 11"><rect x="0" y="0" width="4" height="3.4" fill="#2ecc71"/><rect x="0" y="4.8" width="4" height="6.2" fill="#2ecc71"/><rect x="6.2" y="0.7" width="8.1" height="5" fill="none" stroke="#2ecc71" stroke-width="1.4"/><rect x="5.5" y="7.6" width="9.5" height="3.4" fill="#2ecc71"/></svg>
<div class="a" style="left:1400.4px;top:600px;width:19.1px;height:18.7px;background:#484848;border-radius:4px;border:1px solid #323232;"></div>
<svg class="a" style="left:1403.3px;top:604.3px;" width="14" height="10" viewBox="0 0 14 10"><path d="M0.3 0.2V9.8L4.5 5Z" fill="#d2d2d2"/><path d="M4.4 0.5L8.4 5L4.4 9.5M8.6 0.5L12.6 5L8.6 9.5" fill="none" stroke="#d2d2d2" stroke-width="1.5"/></svg>
<div class="a" style="left:1423.6px;top:600px;width:30.6px;height:18.7px;background:#333333;border-radius:4px;"></div>
<div class="a" style="left:1423.6px;top:600px;width:19px;height:18.7px;background:#484848;border-radius:4px 0 0 4px;"></div>
<div class="a" style="left:1442.1px;top:600px;width:1px;height:18.7px;background:#3a3a3a;"></div>
<div class="a" style="left:1423.6px;top:600px;width:30.6px;height:18.7px;border-radius:4px;border:1px solid #323232;"></div>
<svg class="a" style="left:1445.6px;top:605.5px;" width="6" height="8" viewBox="0 0 6 8"><path d="M0.6 0.6V7.4L5.6 4Z" fill="none" stroke="#8a8a8a" stroke-width="1"/></svg>
<svg class="a" style="left:1426.3px;top:603px;" width="14" height="12" viewBox="0 0 14 12"><rect x="0.7" y="0.7" width="12.6" height="8.6" fill="#3a3a3a" stroke="#e6e6e6" stroke-width="1.3"/><rect x="0" y="9.7" width="14" height="2" fill="#c8c8c8"/></svg>
<div class="a" style="left:1458.5px;top:600px;width:30.8px;height:18.7px;background:#333333;border-radius:4px;"></div>
<div class="a" style="left:1458.5px;top:600px;width:19px;height:18.7px;background:#484848;border-radius:4px 0 0 4px;"></div>
<div class="a" style="left:1477.0px;top:600px;width:1px;height:18.7px;background:#3a3a3a;"></div>
<div class="a" style="left:1458.5px;top:600px;width:30.8px;height:18.7px;border-radius:4px;border:1px solid #323232;"></div>
<svg class="a" style="left:1480.5px;top:605.5px;" width="6" height="8" viewBox="0 0 6 8"><path d="M0.6 0.6V7.4L5.6 4Z" fill="none" stroke="#8a8a8a" stroke-width="1"/></svg>
<svg class="a" style="left:1461px;top:603px;" width="15" height="13" viewBox="0 0 15 13"><rect x="0.6" y="0.6" width="7.6" height="4.8" fill="none" stroke="#c4c4c4" stroke-width="1.2"/><path d="M3.5 7.4H10.4V3.2" fill="none" stroke="#b0b0b0" stroke-width="1.1"/><path d="M5.5 9.5H12.3V5.2" fill="none" stroke="#9a9a9a" stroke-width="1"/><path d="M7.2 11.5H14V7" fill="none" stroke="#858585" stroke-width="1"/></svg>
<div class="a" style="left:1493.4px;top:600px;width:30.8px;height:18.7px;background:#333333;border-radius:4px;"></div>
<div class="a" style="left:1493.4px;top:600px;width:19px;height:18.7px;background:#484848;border-radius:4px 0 0 4px;"></div>
<div class="a" style="left:1511.9px;top:600px;width:1px;height:18.7px;background:#3a3a3a;"></div>
<div class="a" style="left:1493.4px;top:600px;width:30.8px;height:18.7px;border-radius:4px;border:1px solid #323232;"></div>
<svg class="a" style="left:1515.4px;top:605.5px;" width="6" height="8" viewBox="0 0 6 8"><path d="M0.6 0.6V7.4L5.6 4Z" fill="none" stroke="#8a8a8a" stroke-width="1"/></svg>
<svg class="a" style="left:1496px;top:602.5px;" width="15" height="14" viewBox="0 0 15 14"><rect x="0" y="0" width="9" height="9" fill="#cdcdcd"/><rect x="5.6" y="5" width="8" height="8" fill="#484848" stroke="#e2e2e2" stroke-width="1.3"/></svg>
<div class="a" style="left:1528.5px;top:600px;width:30.9px;height:18.7px;background:#333333;border-radius:4px;"></div>
<div class="a" style="left:1528.5px;top:600px;width:19px;height:18.7px;background:#2b2b2b;border-radius:4px 0 0 4px;"></div>
<div class="a" style="left:1547.0px;top:600px;width:1px;height:18.7px;background:#3a3a3a;"></div>
<div class="a" style="left:1528.5px;top:600px;width:30.9px;height:18.7px;border-radius:4px;border:1px solid #323232;"></div>
<svg class="a" style="left:1550.5px;top:605.5px;" width="6" height="8" viewBox="0 0 6 8"><path d="M0.6 0.6V7.4L5.6 4Z" fill="none" stroke="#8a8a8a" stroke-width="1"/></svg>
<svg class="a" style="left:1531.8px;top:602.8px;shape-rendering:crispEdges;" width="12" height="12" viewBox="0 0 12 12"><rect x="0.0" y="0.0" width="3.0" height="3.0" fill="#2ecc71"/><rect x="6.0" y="0.0" width="3.0" height="3.0" fill="#2ecc71"/><rect x="3.0" y="3.0" width="3.0" height="3.0" fill="#2ecc71"/><rect x="9.0" y="3.0" width="3.0" height="3.0" fill="#2ecc71"/><rect x="0.0" y="6.0" width="3.0" height="3.0" fill="#2ecc71"/><rect x="6.0" y="6.0" width="3.0" height="3.0" fill="#2ecc71"/><rect x="3.0" y="9.0" width="3.0" height="3.0" fill="#2ecc71"/><rect x="9.0" y="9.0" width="3.0" height="3.0" fill="#2ecc71"/></svg>
<div class="a" style="left:1563.5px;top:600px;width:19px;height:18.7px;background:#2b2b2b;border-radius:4px;border:1px solid #303030;"></div>
<svg class="a" style="left:1566px;top:602.3px;" width="14" height="14" viewBox="0 0 14 14"><rect x="5.5" y="0" width="3" height="4.2" rx="0.4" fill="#dcdcdc" transform="rotate(0 7 7)"/><rect x="5.5" y="0" width="3" height="4.2" rx="0.4" fill="#dcdcdc" transform="rotate(45 7 7)"/><rect x="5.5" y="0" width="3" height="4.2" rx="0.4" fill="#dcdcdc" transform="rotate(90 7 7)"/><rect x="5.5" y="0" width="3" height="4.2" rx="0.4" fill="#dcdcdc" transform="rotate(135 7 7)"/><rect x="5.5" y="0" width="3" height="4.2" rx="0.4" fill="#dcdcdc" transform="rotate(180 7 7)"/><rect x="5.5" y="0" width="3" height="4.2" rx="0.4" fill="#dcdcdc" transform="rotate(225 7 7)"/><rect x="5.5" y="0" width="3" height="4.2" rx="0.4" fill="#dcdcdc" transform="rotate(270 7 7)"/><rect x="5.5" y="0" width="3" height="4.2" rx="0.4" fill="#dcdcdc" transform="rotate(315 7 7)"/><circle cx="7" cy="7" r="3.6" fill="none" stroke="#dcdcdc" stroke-width="2.6"/></svg>
<div class="a" style="left:1593px;top:85px;width:321px;height:22px;background:#1c1c1c;"></div>
<div class="a" style="left:1593px;top:85px;width:40px;height:22px;background:#444444;border-radius:4px 4px 0 0;"></div>
<span class="t" style="left:1598.5px;top:86.5px;font-size:12px;color:#e2e2e2;line-height:20px;">Color</span>
<div class="a" style="left:1634px;top:85.5px;width:69px;height:21.5px;background:#242424;border-radius:4px 4px 0 0;"></div>
<span class="t" style="left:1639.0px;top:86.5px;font-size:12px;color:#e2e2e2;line-height:20px;letter-spacing:-0.23px;">Add Layers</span>
<div class="a" style="left:1593px;top:107px;width:321px;height:417px;background:#444444;"></div>
<div class="a" style="left:1900.3px;top:107px;width:13.7px;height:417px;background:#3a3a3a;"></div>
<div class="a" style="left:1902.2px;top:108.3px;width:9.6px;height:368px;background:#4f4f4f;border-radius:5px;"></div>
<div class="a" style="left:1645.8px;top:119.5px;width:200px;height:200px;border-radius:50%;background:conic-gradient(from 90deg,#ff0000,#ff00ff,#0000ff,#00ffff,#00ff00,#ffff00,#ff0000);-webkit-mask:radial-gradient(circle closest-side,transparent 73.5px,#000 74.5px,#000 99.3px,transparent 100.3px);mask:radial-gradient(circle closest-side,transparent 73.5px,#000 74.5px,#000 99.3px,transparent 100.3px);"></div>
<div class="a" style="left:1702px;top:176px;width:90px;height:90px;background:linear-gradient(90deg,#000,rgba(0,0,0,0)),linear-gradient(180deg,#fff,#ff0000);"></div>
<svg class="a" style="left:1731px;top:169.5px;" width="13" height="13" viewBox="0 0 13 13"><circle cx="6.5" cy="6.5" r="5.5" fill="none" stroke="#d8d8d8" stroke-width="1.2"/></svg>
<svg class="a" style="left:1826.3px;top:213.5px;" width="13" height="13" viewBox="0 0 13 13"><circle cx="6.5" cy="6.5" r="5.5" fill="none" stroke="#ffffff" stroke-width="1.2"/></svg>
<div class="a" style="left:1600px;top:333px;width:22px;height:22px;background:#646464;border-radius:3px;"></div>
<span class="t" style="left:1625.5px;top:335.0px;font-size:12px;color:#e2e2e2;line-height:20px;letter-spacing:-0.11px;">Dim Gray</span>
<div class="a" style="left:1871px;top:333px;width:22px;height:22px;background:#2b2b2b;border-radius:4px;border:1px solid #1c1c1c;"></div>
<svg class="a" style="left:1875.5px;top:337.5px;" width="13" height="13" viewBox="0 0 13 13"><path d="M0.8 12.2 L1.5 10.1 L7.1 4.5 L8.5 5.9 L2.9 11.5 Z" fill="none" stroke="#d4d4d4" stroke-width="0.9"/><path d="M6.6 3.4 L9.6 6.4" stroke="#d4d4d4" stroke-width="2.1"/><path d="M8 4.8 L10.3 2.6" stroke="#d4d4d4" stroke-width="2.6"/><circle cx="10.6" cy="2.4" r="1.9" fill="#d4d4d4"/></svg>
<div class="a" style="left:1600px;top:360.5px;width:49.5px;height:17px;background:#4c4c4c;border-radius:3px;border:1px solid #363636;"></div>
<span class="t" style="left:1603.5px;top:360.0px;font-size:12px;color:#e2e2e2;line-height:20px;letter-spacing:-0.05px;">Hex</span>
<svg class="a" style="left:1636.5px;top:367.25px;" width="8" height="4.5" viewBox="0 0 8 4.5"><path d="M0 0 L4.0 4.5 L8 0" fill="none" stroke="#c4c4c4" stroke-width="1"/></svg>
<div class="a" style="left:1653px;top:358px;width:240px;height:22px;background:#2b2b2b;border-radius:3px;"></div>
<span class="t" style="left:1658.0px;top:360.0px;font-size:12px;color:#5a5a5a;line-height:20px;letter-spacing:0.28px;">#</span>
<span class="t" style="left:1670.0px;top:360.0px;font-size:12px;color:#e2e2e2;line-height:20px;">646464</span>
<div class="a" style="left:1600px;top:390px;width:236px;height:4px;background:#e6e6e6;border-radius:2px;"></div>
<svg class="a" style="left:1828.5px;top:387px;" width="11" height="11" viewBox="0 0 11 11"><circle cx="5.5" cy="5.5" r="5.2" fill="#7ad3bb"/><circle cx="5.5" cy="5.5" r="2" fill="#4fae96"/></svg>
<div class="a" style="left:1849px;top:385px;width:44px;height:15px;background:#2b2b2b;border-radius:3px;"></div>
<span class="t" style="left:1853.5px;top:383.0px;font-size:12px;color:#5a5a5a;line-height:20px;letter-spacing:0.12px;">A</span>
<span class="t" style="left:1866.5px;top:383.0px;font-size:12px;color:#e2e2e2;line-height:20px;">255</span>
<div class="a" style="left:1597px;top:406px;width:299px;height:22px;background:#2a2a2a;"></div>
<div class="a" style="left:1599px;top:408px;width:148px;height:20px;background:#444444;border-radius:4px 4px 0 0;"></div>
<div class="a" style="left:1747px;top:408px;width:148px;height:20px;background:#363636;border-radius:4px 4px 0 0;"></div>
<span class="t" style="left:1648.1px;top:408.0px;font-size:12px;color:#e2e2e2;line-height:20px;letter-spacing:-0.28px;">Swatches</span>
<span class="t" style="left:1794.2px;top:408.0px;font-size:12px;color:#c8c8c8;line-height:20px;letter-spacing:-0.04px;">Generator</span>
<div class="a" style="left:1598px;top:432px;width:257px;height:17px;background:#595959;border-radius:4px;"></div>
<div class="a" style="left:1599px;top:433px;width:62px;height:15px;background:#2b2b2b;border-radius:3px;"></div>
<svg class="a" style="left:1605px;top:435.5px;" width="12" height="10" viewBox="0 0 12 10"><path d="M1.8 0V10M5 0V10" stroke="#2ecc71" stroke-width="1.7"/><path d="M7.6 0.3L10.2 10" stroke="#2ecc71" stroke-width="1.6"/></svg>
<span class="t" style="left:1621.0px;top:431.0px;font-size:12px;color:#e2e2e2;line-height:20px;letter-spacing:-0.02px;">Library</span>
<svg class="a" style="left:1671px;top:436px;" width="10" height="10" viewBox="0 0 10 10"><path d="M0.5 0.5H4L5 2H9.5V9.5H0.5Z" fill="#d4d4d4"/><path d="M2 4.2H3M4 4.2H8M2 6.8H3M4 6.8H8" stroke="#595959" stroke-width="1.1"/></svg>
<span class="t" style="left:1686.5px;top:431.0px;font-size:12px;color:#e2e2e2;line-height:20px;letter-spacing:-0.01px;">Project</span>
<svg class="a" style="left:1738px;top:435.5px;" width="9" height="11" viewBox="0 0 9 11"><path d="M0.6 0.6H5.2L8.4 3.8V10.4H0.6Z" fill="none" stroke="#d4d4d4" stroke-width="1.2"/><path d="M5 0.6V4H8.4" fill="none" stroke="#d4d4d4" stroke-width="1"/></svg>
<span class="t" style="left:1752.0px;top:431.0px;font-size:12px;color:#e2e2e2;line-height:20px;letter-spacing:-0.5px;">Scene</span>
<svg class="a" style="left:1801px;top:436px;" width="10" height="10" viewBox="0 0 10 10"><path d="M2.5 0.6H7.5Q9.4 0.6 9.4 2.5V5.5L5.5 9.4H2.5Q0.6 9.4 0.6 7.5V2.5Q0.6 0.6 2.5 0.6Z" fill="none" stroke="#d4d4d4" stroke-width="1.2"/><path d="M9.2 5.3H6.5Q5.3 5.3 5.3 6.5V9.2" fill="none" stroke="#d4d4d4" stroke-width="1"/></svg>
<span class="t" style="left:1816.5px;top:431.0px;font-size:12px;color:#e2e2e2;line-height:20px;letter-spacing:-0.36px;">Labels</span>
<div class="a" style="left:1858px;top:432px;width:37px;height:17px;background:#595959;border-radius:4px;"></div>
<div class="a" style="left:1859px;top:433px;width:17px;height:15px;background:#2b2b2b;border-radius:3px;"></div>
<svg class="a" style="left:1863px;top:436px;" width="9" height="9" viewBox="0 0 9 9"><g fill="#2ecc71"><rect x="0" y="0" width="3.6" height="3.6"/><rect x="5.4" y="0" width="3.6" height="3.6"/><rect x="0" y="5.4" width="3.6" height="3.6"/><rect x="5.4" y="5.4" width="3.6" height="3.6"/></g></svg>
<svg class="a" style="left:1881px;top:436.5px;" width="10" height="8" viewBox="0 0 10 8"><path d="M0 0.7H10M0 4H10M0 7.3H10" stroke="#e0e0e0" stroke-width="1.1"/></svg>
<div class="a" style="left:1598px;top:453px;width:275px;height:16.5px;background:#4c4c4c;border-radius:3px;border:1px solid #363636;"></div>
<span class="t" style="left:1601.0px;top:451.5px;font-size:12px;color:#e2e2e2;line-height:20px;letter-spacing:-0.26px;">Simple</span>
<svg class="a" style="left:1860.5px;top:458.75px;" width="8" height="4.5" viewBox="0 0 8 4.5"><path d="M0 0 L4.0 4.5 L8 0" fill="none" stroke="#c4c4c4" stroke-width="1"/></svg>
<div class="a" style="left:1879.5px;top:460px;width:2px;height:2px;background:#e0e0e0;"></div>
<div class="a" style="left:1884.5px;top:460px;width:2px;height:2px;background:#e0e0e0;"></div>
<div class="a" style="left:1889.5px;top:460px;width:2px;height:2px;background:#e0e0e0;"></div>
<div class="a" style="left:1598px;top:470px;width:297px;height:54px;background:#262626;"></div>
<div class="a" style="left:1600px;top:472px;width:18px;height:18px;background:#0e72c4;border-radius:3px;"></div>
<div class="a" style="left:1622px;top:472px;width:18px;height:18px;background:#0b9ad9;border-radius:3px;"></div>
<div class="a" style="left:1644px;top:472px;width:18px;height:18px;background:#93c267;border-radius:3px;"></div>
<div class="a" style="left:1666px;top:472px;width:18px;height:18px;background:#f2e44b;border-radius:3px;"></div>
<div class="a" style="left:1688px;top:472px;width:18px;height:18px;background:#f1750a;border-radius:3px;"></div>
<div class="a" style="left:1593px;top:530px;width:321px;height:22px;background:#1c1c1c;"></div>
<div class="a" style="left:1593px;top:530px;width:38px;height:22px;background:#444444;border-radius:4px 4px 0 0;"></div>
<span class="t" style="left:1598.5px;top:531.5px;font-size:12px;color:#e2e2e2;line-height:20px;letter-spacing:0.01px;">Align</span>
<div class="a" style="left:1593px;top:552px;width:321px;height:68px;background:#444444;"></div>
<span class="t" style="left:1601.0px;top:562.0px;font-size:12px;color:#e2e2e2;line-height:20px;letter-spacing:0.06px;">Alignment</span>
<span class="t" style="left:1601.0px;top:590.0px;font-size:12px;color:#e2e2e2;line-height:20px;letter-spacing:0.24px;">Distribution</span>
<div class="a" style="left:1790.2px;top:562px;width:53.4px;height:17.6px;background:#333;border-radius:4px;border:1px solid #262626;"></div>
<div class="a" style="left:1807.8px;top:562.5px;width:1px;height:16.6px;background:#262626;"></div>
<div class="a" style="left:1825.6000000000001px;top:562.5px;width:1px;height:16.6px;background:#262626;"></div>
<div class="a" style="left:1852.3px;top:562px;width:53.4px;height:17.6px;background:#333;border-radius:4px;border:1px solid #262626;"></div>
<div class="a" style="left:1869.8999999999999px;top:562.5px;width:1px;height:16.6px;background:#262626;"></div>
<div class="a" style="left:1887.7px;top:562.5px;width:1px;height:16.6px;background:#262626;"></div>
<div class="a" style="left:1790.2px;top:590px;width:53.4px;height:17.6px;background:#333;border-radius:4px;border:1px solid #262626;"></div>
<div class="a" style="left:1807.8px;top:590.5px;width:1px;height:16.6px;background:#262626;"></div>
<div class="a" style="left:1825.6000000000001px;top:590.5px;width:1px;height:16.6px;background:#262626;"></div>
<svg class="a" style="left:1785px;top:558px" width="125" height="54" viewBox="1785 558 125 54"><rect x="1792.9" y="564.8" width="1.2" height="13.2" fill="#e6e6e6"/><rect x="1796.3" y="568.1" width="5.6" height="1.9" fill="#e6e6e6"/><rect x="1796.3" y="572.9" width="9.7" height="2.1" fill="#e6e6e6"/><rect x="1816.9" y="564.8" width="1.2" height="13.2" fill="#e6e6e6"/><rect x="1814.0" y="568.1" width="7.0" height="1.9" fill="#e6e6e6"/><rect x="1812.0" y="572.9" width="11.0" height="2.1" fill="#e6e6e6"/><rect x="1839.9" y="564.8" width="1.2" height="13.2" fill="#e6e6e6"/><rect x="1832.0" y="568.1" width="6.0" height="1.9" fill="#e6e6e6"/><rect x="1828.0" y="572.9" width="10.0" height="2.1" fill="#e6e6e6"/><rect x="1853.8" y="564.9" width="13.2" height="1.2" fill="#e6e6e6"/><rect x="1856.9" y="568.5" width="2.0" height="9.4" fill="#e6e6e6"/><rect x="1861.9" y="568.5" width="2.1" height="5.5" fill="#e6e6e6"/><rect x="1872.1" y="571.1" width="13.0" height="1.2" fill="#e6e6e6"/><rect x="1875.0" y="566.2" width="2.0" height="10.8" fill="#e6e6e6"/><rect x="1879.9" y="568.4" width="2.1" height="6.4" fill="#e6e6e6"/><rect x="1891.1" y="576.9" width="13.0" height="1.2" fill="#e6e6e6"/><rect x="1894.0" y="569.0" width="2.0" height="7.5" fill="#e6e6e6"/><rect x="1899.0" y="565.0" width="2.0" height="11.5" fill="#e6e6e6"/><rect x="1792.9" y="591.4" width="1.2" height="14.6" fill="#e6e6e6"/><rect x="1803.9" y="591.4" width="1.2" height="14.6" fill="#e6e6e6"/><rect x="1797.9" y="594.7" width="2.5" height="8.5" fill="#e6e6e6"/><rect x="1810.1" y="592.9" width="14.1" height="1.2" fill="#e6e6e6"/><rect x="1810.1" y="603.8" width="14.1" height="1.2" fill="#e6e6e6"/><rect x="1813.0" y="598.0" width="8.1" height="2.0" fill="#e6e6e6"/><rect x="1830.0" y="599.2" width="2.0" height="3.8" fill="#e6e6e6"/><rect x="1834.1" y="597.2" width="2.1" height="3.8" fill="#e6e6e6"/><rect x="1838.2" y="595.0" width="2.1" height="4.0" fill="#e6e6e6"/><path d="M1828.3 595V593.6Q1828.3 592.6 1829.3 592.6H1831M1839 592.6H1840.9Q1841.9 592.6 1841.9 593.6V595M1841.9 603V604.7Q1841.9 605.7 1840.9 605.7H1839M1831 605.7H1829.3Q1828.3 605.7 1828.3 604.7V603" fill="none" stroke="#e6e6e6" stroke-width="1"/></svg>
<div class="a" style="left:494px;top:626.5px;width:1420px;height:21.5px;background:#1c1c1c;"></div>
<div class="a" style="left:494px;top:626.5px;width:89px;height:21.5px;background:#444;border-radius:4px 4px 0 0;"></div>
<span class="t" style="left:499.5px;top:628.0px;font-size:12px;color:#e2e2e2;line-height:20px;letter-spacing:-0.07px;">Scene Window</span>
<div class="a" style="left:584px;top:627px;width:100px;height:21px;background:#262626;border-radius:4px 4px 0 0;"></div>
<span class="t" style="left:589.5px;top:628.0px;font-size:12px;color:#e2e2e2;line-height:20px;letter-spacing:-0.17px;">JavaScript Editor</span>
<div class="a" style="left:685px;top:627px;width:112px;height:21px;background:#262626;border-radius:4px 4px 0 0;"></div>
<span class="t" style="left:690.5px;top:628.0px;font-size:12px;color:#e2e2e2;line-height:20px;letter-spacing:-0.13px;">Dependency Graph</span>
<div class="a" style="left:494px;top:648px;width:1420px;height:22px;background:#272727;"></div>
<div class="a" style="left:1627px;top:650px;width:282px;height:20px;background:#444444;border-radius:4px 4px 0 0;"></div>
<span class="t" style="left:591.1px;top:649.5px;font-size:12px;color:#b4b4b4;line-height:20px;letter-spacing:0.01px;">Composition 1</span>
<svg class="a" style="left:764.5px;top:656.0px;" width="7" height="7" viewBox="0 0 7 7"><path d="M0 0L7 7M7 0L0 7" stroke="#9a9a9a" stroke-width="1"/></svg>
<div class="a" style="left:781.5px;top:654px;width:1px;height:11px;background:#8a8a8a;"></div>
<span class="t" style="left:841.3px;top:649.5px;font-size:12px;color:#b4b4b4;line-height:20px;letter-spacing:-0.04px;">background grid animation</span>
<svg class="a" style="left:1046.5px;top:656.0px;" width="7" height="7" viewBox="0 0 7 7"><path d="M0 0L7 7M7 0L0 7" stroke="#9a9a9a" stroke-width="1"/></svg>
<div class="a" style="left:1063px;top:654px;width:1px;height:11px;background:#8a8a8a;"></div>
<span class="t" style="left:1118.5px;top:649.5px;font-size:12px;color:#b4b4b4;line-height:20px;letter-spacing:-0.05px;">background grid animation 1</span>
<svg class="a" style="left:1328.5px;top:656.0px;" width="7" height="7" viewBox="0 0 7 7"><path d="M0 0L7 7M7 0L0 7" stroke="#9a9a9a" stroke-width="1"/></svg>
<div class="a" style="left:1345px;top:654px;width:1px;height:11px;background:#8a8a8a;"></div>
<span class="t" style="left:1400.5px;top:649.5px;font-size:12px;color:#b4b4b4;line-height:20px;letter-spacing:-0.05px;">background grid animation 2</span>
<svg class="a" style="left:1610.5px;top:656.0px;" width="7" height="7" viewBox="0 0 7 7"><path d="M0 0L7 7M7 0L0 7" stroke="#9a9a9a" stroke-width="1"/></svg>
<span class="t" style="left:1715.0px;top:649.5px;font-size:12px;color:#e2e2e2;line-height:20px;letter-spacing:0.02px;">duplicator blend</span>
<svg class="a" style="left:1892.5px;top:656.0px;" width="7" height="7" viewBox="0 0 7 7"><path d="M0 0L7 7M7 0L0 7" stroke="#b0b0b0" stroke-width="1"/></svg>
<div class="a" style="left:494px;top:670px;width:525px;height:328px;background:#444;"></div>
<div class="a" style="left:1019px;top:670px;width:7px;height:328px;background:#1e1e1e;"></div>
<div class="a" style="left:494px;top:712px;width:511px;height:250px;background:#353535;"></div>
<div class="a" style="left:1005px;top:712px;width:14px;height:250px;background:#2b2b2b;"></div>
<div class="a" style="left:494px;top:962px;width:525px;height:14px;background:#2b2b2b;"></div>
<div class="a" style="left:497px;top:672px;width:314px;height:20px;background:#232323;border-radius:10px;"></div>
<svg class="a" style="left:501px;top:675px;" width="14" height="14" viewBox="0 0 14 14"><circle cx="5.3" cy="5.3" r="4.6" fill="none" stroke="#e4e4e4" stroke-width="1.15"/><path d="M9.4 9.4 L11.6 11.6" stroke="#e4e4e4" stroke-width="2.2"/></svg>
<span class="t" style="left:520.0px;top:672.5px;font-size:12px;color:#8c8c8c;line-height:20px;letter-spacing:-0.22px;">Enter a layer name</span>
<div class="a" style="left:813.3px;top:672.6px;width:19.2px;height:19px;background:#2b2b2b;border-radius:4px;border:1px solid #242424;"></div>
<div class="a" style="left:857.1px;top:672.6px;width:19.2px;height:19px;background:#3a3a3a;border-radius:4px;border:1px solid #242424;"></div>
<div class="a" style="left:879.3px;top:672.6px;width:19.2px;height:19px;background:#2b2b2b;border-radius:4px;border:1px solid #242424;"></div>
<div class="a" style="left:901.3px;top:672.6px;width:19.2px;height:19px;background:#2b2b2b;border-radius:4px;border:1px solid #242424;"></div>
<svg class="a" style="left:817px;top:676.5px;" width="11" height="11" viewBox="0 0 11 11"><path d="M5.5 0V11M0 5.5H11" stroke="#f0f0f0" stroke-width="1.7"/></svg>
<svg class="a" style="left:829px;top:689px" width="3" height="3"><path d="M0 3h3v-3z" fill="#2ecc71"/></svg>
<svg class="a" style="left:860.5px;top:675px;" width="14" height="14" viewBox="0 0 14 14"><circle cx="8.5" cy="5.5" r="4.8" fill="#dcdcdc"/><path d="M1 9 Q3 14 9 12.5" fill="none" stroke="#8a8a8a" stroke-width="2.2"/><path d="M2.5 6 Q3.5 11 9 11" fill="none" stroke="#a8a8a8" stroke-width="1.6"/></svg>
<svg class="a" style="left:883px;top:675.5px;" width="13" height="13" viewBox="0 0 13 13"><g fill="#e8e8e8"><rect x="1" y="1" width="1.8" height="1.8"/><rect x="6.5" y="0.5" width="1.8" height="1.8"/><rect x="0.5" y="6.5" width="1.8" height="1.8"/><path d="M7.5 4.5 L8.5 7 L11 8 L8.5 9 L7.5 11.5 L6.5 9 L4 8 L6.5 7Z"/></g><path d="M10.5 13h2.5v-2.5z" fill="#2ecc71"/></svg>
<svg class="a" style="left:904.5px;top:675.5px;" width="14" height="13" viewBox="0 0 14 13"><path d="M0 2H3M7 2H14M0 6.5H7M11 6.5H14M0 11H2M6 11H14" stroke="#e0e0e0" stroke-width="1.2"/><circle cx="5" cy="2" r="1.5" fill="none" stroke="#e0e0e0"/><circle cx="9" cy="6.5" r="1.5" fill="none" stroke="#e0e0e0"/><circle cx="4" cy="11" r="1.5" fill="none" stroke="#e0e0e0"/><path d="M11.5 13h2.5v-2.5z" fill="#2ecc71"/></svg>
<div class="a" style="left:922px;top:666.8px;width:100px;height:29.2px;background:#444;border:3px solid #b5e61d;"></div>
<div class="a" style="left:925px;top:670.5px;width:93.7px;height:22px;background:#282828;border-radius:2px;"></div>
<span class="t" style="left:928.5px;top:672.5px;font-size:12px;color:#4e4e4e;line-height:20px;letter-spacing:-0.55px;">F</span>
<span class="t" style="left:940.5px;top:672.5px;font-size:12px;color:#e2e2e2;line-height:20px;">104</span>
<div class="a" style="left:494px;top:694px;width:525px;height:18px;background:#464646;"></div>
<svg class="a" style="left:500.5px;top:697px;" width="9" height="11" viewBox="0 0 9 11"><path d="M2.2 5V3.2Q2.2 0.7 4.5 0.7Q6.8 0.7 6.8 3.2V5" fill="none" stroke="#d6d6d6" stroke-width="1.3"/><rect x="0.3" y="4.8" width="8.4" height="6" rx="0.8" fill="#d6d6d6"/><rect x="3.8" y="6.8" width="1.4" height="2.2" fill="#464646"/></svg>
<svg class="a" style="left:517px;top:698.5px;" width="14" height="9" viewBox="0 0 14 9"><path d="M0.5 4.5Q7 -2.5 13.5 4.5Q7 11.5 0.5 4.5Z" fill="none" stroke="#d6d6d6" stroke-width="1.1"/><circle cx="7" cy="4.5" r="2.1" fill="#d6d6d6"/></svg>
<svg class="a" style="left:536.5px;top:696.5px;" width="13" height="13" viewBox="0 0 13 13"><path d="M6.5 0.7L12.3 3.5V9.5L6.5 12.3L0.7 9.5V3.5Z M0.7 3.5L6.5 6.3L12.3 3.5M6.5 6.3V12.3" fill="none" stroke="#d6d6d6" stroke-width="1.1"/></svg>
<svg class="a" style="left:555.5px;top:697.5px;" width="15" height="11" viewBox="0 0 15 11"><path d="M0.5 3.5H3L6.5 0.5V10.5L3 7.5H0.5Z" fill="#d6d6d6"/><path d="M8.5 3Q10.3 5.5 8.5 8M10.8 1.3Q13.8 5.5 10.8 9.7" fill="none" stroke="#d6d6d6" stroke-width="1.2"/></svg>
<svg class="a" style="left:575px;top:696.5px;" width="13" height="13" viewBox="0 0 13 13"><path d="M0.8 12.2 L1.5 10.1 L7.1 4.5 L8.5 5.9 L2.9 11.5 Z" fill="none" stroke="#c4c4c4" stroke-width="0.9"/><path d="M6.6 3.4 L9.6 6.4" stroke="#c4c4c4" stroke-width="2.1"/><path d="M8 4.8 L10.3 2.6" stroke="#c4c4c4" stroke-width="2.6"/><circle cx="10.6" cy="2.4" r="1.9" fill="#c4c4c4"/></svg>
<svg class="a" style="left:593px;top:698.5px;" width="14" height="9" viewBox="0 0 14 9"><path d="M4 0H13.5V9H4L0 4.5Z" fill="#d6d6d6"/><circle cx="4.6" cy="4.5" r="1.7" fill="#464646"/></svg>
<span class="t" style="left:649.5px;top:693.5px;font-size:12px;color:#e2e2e2;line-height:20px;letter-spacing:-0.21px;">Name</span>
<div class="a" style="left:496px;top:757px;width:508px;height:20px;background:#4d5040;border-radius:3px;"></div>
<div class="a" style="left:496px;top:714px;width:18px;height:18px;background:#2d2d2d;border-radius:3px;"></div>
<div class="a" style="left:515px;top:714px;width:18px;height:18px;background:#2d2d2d;border-radius:3px;"></div>
<svg class="a" style="left:518px;top:717px;" width="12" height="12" viewBox="0 0 12 12"><circle cx="6" cy="6.3" r="4.5" fill="none" stroke="#d6d6d6" stroke-width="1.1"/><path d="M3.8 6.2 L5.7 8.1 L10 3" fill="none" stroke="#d6d6d6" stroke-width="1.3"/></svg>
<div class="a" style="left:573px;top:715px;width:16px;height:16px;background:#c8f07a;border-radius:3px;"></div>
<svg class="a" style="left:593px;top:718.5px;" width="14" height="9" viewBox="0 0 14 9"><path d="M4 0H13.5V9H4L0 4.5Z" fill="#d6d6d6"/><circle cx="4.6" cy="4.5" r="1.7" fill="#353535"/></svg>
<svg class="a" style="left:648px;top:719px;" width="14" height="9" viewBox="0 0 14 9"><rect x="0.2" y="0.6" width="7.3" height="2.2" fill="#8fd895"/><rect x="3.3" y="3.7" width="7.8" height="2.2" fill="#9be0a0"/><rect x="6.4" y="6.8" width="7.6" height="2.2" fill="#9be0a0"/></svg>
<span class="t" style="left:667.3px;top:713.5px;font-size:12px;color:#e2e2e2;line-height:20px;letter-spacing:0.06px;">TransitionOffset</span>
<div class="a" style="left:965px;top:715px;width:21px;height:16px;background:#303030;border-radius:3px;"></div>
<div class="a" style="left:975.2px;top:715px;width:1px;height:16px;background:#3a3a3a;"></div>
<svg class="a" style="left:967px;top:719.3px;" width="6.4" height="7.4" viewBox="0 0 6.4 7.4"><path d="M6.2 0H3.4L0.2 3.7L3.4 7.4H6.2Z" fill="#7a7a7a"/></svg>
<svg class="a" style="left:977.8px;top:719.3px;" width="6.4" height="7.4" viewBox="0 0 6.4 7.4"><path d="M0.2 0H3L6.2 3.7L3 7.4H0.2Z" fill="#d35cf0"/></svg>
<svg class="a" style="left:990.5px;top:718px;" width="10" height="10" viewBox="0 0 10 10"><circle cx="5" cy="5" r="4" fill="none" stroke="#808080" stroke-width="1.1"/></svg>
<div class="a" style="left:496px;top:736px;width:18px;height:18px;background:#2d2d2d;border-radius:3px;"></div>
<div class="a" style="left:515px;top:736px;width:18px;height:18px;background:#2d2d2d;border-radius:3px;"></div>
<div class="a" style="left:534px;top:736px;width:18px;height:18px;background:#2d2d2d;border-radius:3px;"></div>
<svg class="a" style="left:517px;top:740.5px;" width="14" height="9" viewBox="0 0 14 9"><path d="M0.5 4.5Q7 -2.5 13.5 4.5Q7 11.5 0.5 4.5Z" fill="none" stroke="#d6d6d6" stroke-width="1.1"/><circle cx="7" cy="4.5" r="2.1" fill="#d6d6d6"/></svg>
<div class="a" style="left:573px;top:737px;width:16px;height:16px;background:#c6c6c6;border-radius:3px;"></div>
<svg class="a" style="left:593px;top:740.5px;" width="14" height="9" viewBox="0 0 14 9"><path d="M4 0H13.5V9H4L0 4.5Z" fill="#d6d6d6"/><circle cx="4.6" cy="4.5" r="1.7" fill="#353535"/></svg>
<div class="a" style="left:611px;top:737px;width:31px;height:16px;background:#333333;border-radius:3px;"></div>
<svg class="a" style="left:614.25px;top:743.0px;" width="7.5" height="4" viewBox="0 0 7.5 4"><path d="M0 0 L3.75 4 L7.5 0" fill="none" stroke="#9c9c9c" stroke-width="1"/></svg>
<svg class="a" style="left:648px;top:739px;" width="14" height="12" viewBox="0 0 14 12"><path d="M0.3 0.5H5L6.5 2.5H13.7V12H0.3Z" fill="#cfcfcf"/></svg>
<span class="t" style="left:667.3px;top:735.5px;font-size:12px;color:#e2e2e2;line-height:20px;">4</span>
<svg class="a" style="left:990.5px;top:740px;" width="10" height="10" viewBox="0 0 10 10"><circle cx="5" cy="5" r="4" fill="none" stroke="#808080" stroke-width="1.1"/></svg>
<div class="a" style="left:496px;top:758px;width:18px;height:18px;background:#2d2d2d;border-radius:3px;"></div>
<div class="a" style="left:515px;top:758px;width:18px;height:18px;background:#2d2d2d;border-radius:3px;"></div>
<svg class="a" style="left:518px;top:761px;" width="12" height="12" viewBox="0 0 12 12"><circle cx="6" cy="6.3" r="4.5" fill="none" stroke="#d6d6d6" stroke-width="1.1"/><path d="M3.8 6.2 L5.7 8.1 L10 3" fill="none" stroke="#d6d6d6" stroke-width="1.3"/></svg>
<div class="a" style="left:573px;top:759px;width:16px;height:16px;background:#c8f07a;border-radius:3px;"></div>
<svg class="a" style="left:593px;top:762.5px;" width="14" height="9" viewBox="0 0 14 9"><path d="M4 0H13.5V9H4L0 4.5Z" fill="#d6d6d6"/><circle cx="4.6" cy="4.5" r="1.7" fill="#4d5040"/></svg>
<div class="a" style="left:629px;top:759px;width:32px;height:16px;background:#2d2d2d;border-radius:3px;"></div>
<svg class="a" style="left:633.25px;top:765.0px;" width="7.5" height="4" viewBox="0 0 7.5 4"><path d="M0 0 L3.75 4 L7.5 0" fill="none" stroke="#9c9c9c" stroke-width="1"/></svg>
<svg class="a" style="left:650px;top:764px;" width="6" height="6" viewBox="0 0 6 6"><circle cx="3" cy="3" r="3" fill="#f4f4f4"/></svg>
<svg class="a" style="left:666.5px;top:760px;shape-rendering:crispEdges;" width="14" height="14" viewBox="0 0 14 14"><rect x="2.00" y="0.00" width="2.00" height="2.00" fill="#a8eea6"/><rect x="4.00" y="0.00" width="2.00" height="2.00" fill="#a8eea6"/><rect x="6.00" y="0.00" width="2.00" height="2.00" fill="#a8eea6"/><rect x="10.00" y="0.00" width="2.00" height="2.00" fill="#a8eea6"/><rect x="0.00" y="2.00" width="2.00" height="2.00" fill="#a8eea6"/><rect x="6.00" y="2.00" width="2.00" height="2.00" fill="#84c686"/><rect x="8.00" y="2.00" width="2.00" height="2.00" fill="#84c686"/><rect x="12.00" y="2.00" width="2.00" height="2.00" fill="#84c686"/><rect x="0.00" y="4.00" width="2.00" height="2.00" fill="#a8eea6"/><rect x="2.00" y="4.00" width="2.00" height="2.00" fill="#84c686"/><rect x="4.00" y="4.00" width="2.00" height="2.00" fill="#84c686"/><rect x="6.00" y="4.00" width="2.00" height="2.00" fill="#84c686"/><rect x="8.00" y="4.00" width="2.00" height="2.00" fill="#a8eea6"/><rect x="10.00" y="4.00" width="2.00" height="2.00" fill="#a8eea6"/><rect x="12.00" y="4.00" width="2.00" height="2.00" fill="#a8eea6"/><rect x="2.00" y="6.00" width="2.00" height="2.00" fill="#84c686"/><rect x="4.00" y="6.00" width="2.00" height="2.00" fill="#a8eea6"/><rect x="8.00" y="6.00" width="2.00" height="2.00" fill="#84c686"/><rect x="12.00" y="6.00" width="2.00" height="2.00" fill="#a8eea6"/><rect x="0.00" y="8.00" width="2.00" height="2.00" fill="#a8eea6"/><rect x="2.00" y="8.00" width="2.00" height="2.00" fill="#84c686"/><rect x="4.00" y="8.00" width="2.00" height="2.00" fill="#84c686"/><rect x="8.00" y="8.00" width="2.00" height="2.00" fill="#84c686"/><rect x="10.00" y="8.00" width="2.00" height="2.00" fill="#84c686"/><rect x="0.00" y="10.00" width="2.00" height="2.00" fill="#84c686"/><rect x="2.00" y="10.00" width="2.00" height="2.00" fill="#a8eea6"/><rect x="6.00" y="10.00" width="2.00" height="2.00" fill="#84c686"/><rect x="8.00" y="10.00" width="2.00" height="2.00" fill="#84c686"/><rect x="12.00" y="10.00" width="2.00" height="2.00" fill="#a8eea6"/><rect x="0.00" y="12.00" width="2.00" height="2.00" fill="#a8eea6"/><rect x="4.00" y="12.00" width="2.00" height="2.00" fill="#a8eea6"/><rect x="6.00" y="12.00" width="2.00" height="2.00" fill="#a8eea6"/><rect x="8.00" y="12.00" width="2.00" height="2.00" fill="#84c686"/><rect x="10.00" y="12.00" width="2.00" height="2.00" fill="#84c686"/><rect x="12.00" y="12.00" width="2.00" height="2.00" fill="#84c686"/></svg>
<span class="t" style="left:686.5px;top:757.5px;font-size:12px;color:#e2e2e2;line-height:20px;letter-spacing:-0.08px;">TransitionNoise</span>
<div class="a" style="left:965px;top:759px;width:21px;height:16px;background:#303030;border-radius:3px;"></div>
<div class="a" style="left:975.2px;top:759px;width:1px;height:16px;background:#3a3a3a;"></div>
<svg class="a" style="left:967px;top:763.3px;" width="6.4" height="7.4" viewBox="0 0 6.4 7.4"><path d="M6.2 0H3.4L0.2 3.7L3.4 7.4H6.2Z" fill="#7a7a7a"/></svg>
<svg class="a" style="left:977.8px;top:763.3px;" width="6.4" height="7.4" viewBox="0 0 6.4 7.4"><path d="M0.2 0H3L6.2 3.7L3 7.4H0.2Z" fill="#d35cf0"/></svg>
<svg class="a" style="left:990.5px;top:762px;" width="10" height="10" viewBox="0 0 10 10"><circle cx="5" cy="5" r="4" fill="none" stroke="#808080" stroke-width="1.1"/></svg>
<div class="a" style="left:496px;top:802px;width:18px;height:18px;background:#2d2d2d;border-radius:3px;"></div>
<div class="a" style="left:515px;top:802px;width:18px;height:18px;background:#2d2d2d;border-radius:3px;"></div>
<div class="a" style="left:534px;top:802px;width:18px;height:18px;background:#2d2d2d;border-radius:3px;"></div>
<svg class="a" style="left:517px;top:806.5px;" width="14" height="9" viewBox="0 0 14 9"><path d="M0.5 4.5Q7 -2.5 13.5 4.5Q7 11.5 0.5 4.5Z" fill="none" stroke="#d6d6d6" stroke-width="1.1"/><circle cx="7" cy="4.5" r="2.1" fill="#d6d6d6"/></svg>
<div class="a" style="left:573px;top:803px;width:16px;height:16px;background:#ffe680;border-radius:3px;"></div>
<svg class="a" style="left:593px;top:806.5px;" width="14" height="9" viewBox="0 0 14 9"><path d="M4 0H13.5V9H4L0 4.5Z" fill="#d6d6d6"/><circle cx="4.6" cy="4.5" r="1.7" fill="#353535"/></svg>
<svg class="a" style="left:666.5px;top:805px;" width="13" height="12" viewBox="0 0 13 12"><rect x="0.0" y="0" width="1.8" height="1.8" fill="#ffe680"/><rect x="5.2" y="0" width="1.8" height="1.8" fill="#ffe680"/><rect x="10.4" y="0" width="1.8" height="1.8" fill="#ffe680"/><rect x="0.0" y="5" width="1.8" height="1.8" fill="#ffe680"/><rect x="5.2" y="5" width="1.8" height="1.8" fill="#ffe680"/><rect x="10.4" y="5" width="1.8" height="1.8" fill="#ffe680"/><rect x="0.0" y="10" width="1.8" height="1.8" fill="#ffe680"/><rect x="5.2" y="10" width="1.8" height="1.8" fill="#ffe680"/><rect x="10.4" y="10" width="1.8" height="1.8" fill="#ffe680"/></svg>
<span class="t" style="left:686.5px;top:801.5px;font-size:12px;color:#e2e2e2;line-height:20px;letter-spacing:0.05px;">WaveDuplicator</span>
<div class="a" style="left:965px;top:803px;width:21px;height:16px;background:#303030;border-radius:3px;"></div>
<div class="a" style="left:975.2px;top:803px;width:1px;height:16px;background:#3a3a3a;"></div>
<svg class="a" style="left:967px;top:807.3px;" width="6.4" height="7.4" viewBox="0 0 6.4 7.4"><path d="M6.2 0H3.4L0.2 3.7L3.4 7.4H6.2Z" fill="#e0c56a"/></svg>
<svg class="a" style="left:977.8px;top:807.3px;" width="6.4" height="7.4" viewBox="0 0 6.4 7.4"><path d="M0.2 0H3L6.2 3.7L3 7.4H0.2Z" fill="#8a8a8a"/></svg>
<svg class="a" style="left:990.5px;top:806px;" width="10" height="10" viewBox="0 0 10 10"><circle cx="5" cy="5" r="4" fill="none" stroke="#808080" stroke-width="1.1"/></svg>
<div class="a" style="left:496px;top:824px;width:18px;height:18px;background:#2d2d2d;border-radius:3px;"></div>
<div class="a" style="left:515px;top:824px;width:18px;height:18px;background:#2d2d2d;border-radius:3px;"></div>
<div class="a" style="left:534px;top:824px;width:18px;height:18px;background:#2d2d2d;border-radius:3px;"></div>
<div class="a" style="left:573px;top:825px;width:16px;height:16px;background:#ffe680;border-radius:3px;"></div>
<svg class="a" style="left:593px;top:828.5px;" width="14" height="9" viewBox="0 0 14 9"><path d="M4 0H13.5V9H4L0 4.5Z" fill="#d6d6d6"/><circle cx="4.6" cy="4.5" r="1.7" fill="#353535"/></svg>
<svg class="a" style="left:666.5px;top:826.5px;" width="13" height="13" viewBox="0 0 13 13"><rect x="0.8" y="0.8" width="11.4" height="11.4" fill="none" stroke="#ffe680" stroke-width="1" stroke-dasharray="3.8 1.9" stroke-dashoffset="1.9"/></svg>
<span class="t" style="left:686.5px;top:823.5px;font-size:12px;color:#a6a6a6;line-height:20px;letter-spacing:-0.15px;">InputShape</span>
<div class="a" style="left:965px;top:825px;width:21px;height:16px;background:#303030;border-radius:3px;"></div>
<div class="a" style="left:975.2px;top:825px;width:1px;height:16px;background:#3a3a3a;"></div>
<svg class="a" style="left:967px;top:829.3px;" width="6.4" height="7.4" viewBox="0 0 6.4 7.4"><path d="M6.2 0H3.4L0.2 3.7L3.4 7.4H6.2Z" fill="#7a7a7a"/></svg>
<svg class="a" style="left:977.8px;top:829.3px;" width="6.4" height="7.4" viewBox="0 0 6.4 7.4"><path d="M0.2 0H3L6.2 3.7L3 7.4H0.2Z" fill="#d35cf0"/></svg>
<svg class="a" style="left:990.5px;top:828px;" width="10" height="10" viewBox="0 0 10 10"><circle cx="5" cy="5" r="4" fill="none" stroke="#808080" stroke-width="1.1"/></svg>
<div class="a" style="left:496px;top:846px;width:18px;height:18px;background:#2d2d2d;border-radius:3px;"></div>
<div class="a" style="left:515px;top:846px;width:18px;height:18px;background:#2d2d2d;border-radius:3px;"></div>
<div class="a" style="left:534px;top:846px;width:18px;height:18px;background:#2d2d2d;border-radius:3px;"></div>
<div class="a" style="left:573px;top:847px;width:16px;height:16px;background:#c6c6c6;border-radius:3px;"></div>
<svg class="a" style="left:593px;top:850.5px;" width="14" height="9" viewBox="0 0 14 9"><path d="M4 0H13.5V9H4L0 4.5Z" fill="#d6d6d6"/><circle cx="4.6" cy="4.5" r="1.7" fill="#353535"/></svg>
<div class="a" style="left:611px;top:847px;width:31px;height:16px;background:#333333;border-radius:3px;"></div>
<svg class="a" style="left:615.5px;top:851px;" width="4.5" height="8" viewBox="0 0 4.5 8"><path d="M0.3 0.3L4 4L0.3 7.7" fill="none" stroke="#9c9c9c" stroke-width="1.1"/></svg>
<svg class="a" style="left:648px;top:849px;" width="14" height="12" viewBox="0 0 14 12"><path d="M0.3 0.5H5L6.5 2.5H13.7V12H0.3Z" fill="#cfcfcf"/></svg>
<span class="t" style="left:667.3px;top:845.5px;font-size:12px;color:#a6a6a6;line-height:20px;">3</span>
<svg class="a" style="left:990.5px;top:850px;" width="10" height="10" viewBox="0 0 10 10"><circle cx="5" cy="5" r="4" fill="none" stroke="#808080" stroke-width="1.1"/></svg>
<div class="a" style="left:496px;top:868px;width:18px;height:18px;background:#2d2d2d;border-radius:3px;"></div>
<div class="a" style="left:515px;top:868px;width:18px;height:18px;background:#2d2d2d;border-radius:3px;"></div>
<svg class="a" style="left:518px;top:871px;" width="12" height="12" viewBox="0 0 12 12"><circle cx="6" cy="6.3" r="4.5" fill="none" stroke="#d6d6d6" stroke-width="1.1"/><path d="M3.8 6.2 L5.7 8.1 L10 3" fill="none" stroke="#d6d6d6" stroke-width="1.3"/></svg>
<div class="a" style="left:573px;top:869px;width:16px;height:16px;background:#c8f07a;border-radius:3px;"></div>
<svg class="a" style="left:593px;top:872.5px;" width="14" height="9" viewBox="0 0 14 9"><path d="M4 0H13.5V9H4L0 4.5Z" fill="#d6d6d6"/><circle cx="4.6" cy="4.5" r="1.7" fill="#353535"/></svg>
<div class="a" style="left:611px;top:869px;width:31px;height:16px;background:#333333;border-radius:3px;"></div>
<svg class="a" style="left:615.5px;top:873px;" width="4.5" height="8" viewBox="0 0 4.5 8"><path d="M0.3 0.3L4 4L0.3 7.7" fill="none" stroke="#9c9c9c" stroke-width="1.1"/></svg>
<svg class="a" style="left:630.5px;top:874px;" width="6" height="6" viewBox="0 0 6 6"><circle cx="3" cy="3" r="3" fill="#f4f4f4"/></svg>
<svg class="a" style="left:648px;top:870.5px;" width="14" height="13" viewBox="0 0 14 13"><g fill="#8fd694"><rect x="0" y="0.5" width="2" height="2"/><rect x="0" y="5.5" width="2" height="2"/><rect x="0" y="10.5" width="2" height="2"/><rect x="4" y="10.5" width="4" height="2"/><rect x="10" y="10.5" width="4" height="2"/></g><path d="M5 1L12 7.5M12 1L5 7.5" stroke="#e4e4e4" stroke-width="1.2"/><path d="M4 0.8H7M10.5 0.8H13.5" stroke="#e4e4e4" stroke-width="1"/></svg>
<span class="t" style="left:667.3px;top:867.5px;font-size:12px;color:#e2e2e2;line-height:20px;letter-spacing:0.28px;">2to3</span>
<div class="a" style="left:965px;top:869px;width:21px;height:16px;background:#303030;border-radius:3px;"></div>
<div class="a" style="left:975.2px;top:869px;width:1px;height:16px;background:#3a3a3a;"></div>
<svg class="a" style="left:967px;top:873.3px;" width="6.4" height="7.4" viewBox="0 0 6.4 7.4"><path d="M6.2 0H3.4L0.2 3.7L3.4 7.4H6.2Z" fill="#e0c56a"/></svg>
<svg class="a" style="left:977.8px;top:873.3px;" width="6.4" height="7.4" viewBox="0 0 6.4 7.4"><path d="M0.2 0H3L6.2 3.7L3 7.4H0.2Z" fill="#d35cf0"/></svg>
<svg class="a" style="left:990.5px;top:872px;" width="10" height="10" viewBox="0 0 10 10"><circle cx="5" cy="5" r="4" fill="none" stroke="#808080" stroke-width="1.1"/></svg>
<div class="a" style="left:496px;top:890px;width:18px;height:18px;background:#2d2d2d;border-radius:3px;"></div>
<div class="a" style="left:515px;top:890px;width:18px;height:18px;background:#2d2d2d;border-radius:3px;"></div>
<div class="a" style="left:534px;top:890px;width:18px;height:18px;background:#2d2d2d;border-radius:3px;"></div>
<div class="a" style="left:573px;top:891px;width:16px;height:16px;background:#c6c6c6;border-radius:3px;"></div>
<svg class="a" style="left:593px;top:894.5px;" width="14" height="9" viewBox="0 0 14 9"><path d="M4 0H13.5V9H4L0 4.5Z" fill="#d6d6d6"/><circle cx="4.6" cy="4.5" r="1.7" fill="#353535"/></svg>
<div class="a" style="left:611px;top:891px;width:31px;height:16px;background:#333333;border-radius:3px;"></div>
<svg class="a" style="left:615.5px;top:895px;" width="4.5" height="8" viewBox="0 0 4.5 8"><path d="M0.3 0.3L4 4L0.3 7.7" fill="none" stroke="#9c9c9c" stroke-width="1.1"/></svg>
<svg class="a" style="left:648px;top:893px;" width="14" height="12" viewBox="0 0 14 12"><path d="M0.3 0.5H5L6.5 2.5H13.7V12H0.3Z" fill="#cfcfcf"/></svg>
<span class="t" style="left:667.3px;top:889.5px;font-size:12px;color:#a6a6a6;line-height:20px;">2</span>
<svg class="a" style="left:990.5px;top:894px;" width="10" height="10" viewBox="0 0 10 10"><circle cx="5" cy="5" r="4" fill="none" stroke="#808080" stroke-width="1.1"/></svg>
<div class="a" style="left:496px;top:912px;width:18px;height:18px;background:#2d2d2d;border-radius:3px;"></div>
<div class="a" style="left:515px;top:912px;width:18px;height:18px;background:#2d2d2d;border-radius:3px;"></div>
<svg class="a" style="left:518px;top:915px;" width="12" height="12" viewBox="0 0 12 12"><circle cx="6" cy="6.3" r="4.5" fill="none" stroke="#d6d6d6" stroke-width="1.1"/><path d="M3.8 6.2 L5.7 8.1 L10 3" fill="none" stroke="#d6d6d6" stroke-width="1.3"/></svg>
<div class="a" style="left:573px;top:913px;width:16px;height:16px;background:#c8f07a;border-radius:3px;"></div>
<svg class="a" style="left:593px;top:916.5px;" width="14" height="9" viewBox="0 0 14 9"><path d="M4 0H13.5V9H4L0 4.5Z" fill="#d6d6d6"/><circle cx="4.6" cy="4.5" r="1.7" fill="#353535"/></svg>
<div class="a" style="left:611px;top:913px;width:31px;height:16px;background:#333333;border-radius:3px;"></div>
<svg class="a" style="left:615.5px;top:917px;" width="4.5" height="8" viewBox="0 0 4.5 8"><path d="M0.3 0.3L4 4L0.3 7.7" fill="none" stroke="#9c9c9c" stroke-width="1.1"/></svg>
<svg class="a" style="left:630.5px;top:918px;" width="6" height="6" viewBox="0 0 6 6"><circle cx="3" cy="3" r="3" fill="#f4f4f4"/></svg>
<svg class="a" style="left:648px;top:914.5px;" width="14" height="13" viewBox="0 0 14 13"><g fill="#8fd694"><rect x="0" y="0.5" width="2" height="2"/><rect x="0" y="5.5" width="2" height="2"/><rect x="0" y="10.5" width="2" height="2"/><rect x="4" y="10.5" width="4" height="2"/><rect x="10" y="10.5" width="4" height="2"/></g><path d="M5 1L12 7.5M12 1L5 7.5" stroke="#e4e4e4" stroke-width="1.2"/><path d="M4 0.8H7M10.5 0.8H13.5" stroke="#e4e4e4" stroke-width="1"/></svg>
<span class="t" style="left:667.3px;top:911.5px;font-size:12px;color:#e2e2e2;line-height:20px;letter-spacing:0.21px;">1to2 &amp; 4to1</span>
<div class="a" style="left:965px;top:913px;width:21px;height:16px;background:#303030;border-radius:3px;"></div>
<div class="a" style="left:975.2px;top:913px;width:1px;height:16px;background:#3a3a3a;"></div>
<svg class="a" style="left:967px;top:917.3px;" width="6.4" height="7.4" viewBox="0 0 6.4 7.4"><path d="M6.2 0H3.4L0.2 3.7L3.4 7.4H6.2Z" fill="#e0c56a"/></svg>
<svg class="a" style="left:977.8px;top:917.3px;" width="6.4" height="7.4" viewBox="0 0 6.4 7.4"><path d="M0.2 0H3L6.2 3.7L3 7.4H0.2Z" fill="#d35cf0"/></svg>
<svg class="a" style="left:990.5px;top:916px;" width="10" height="10" viewBox="0 0 10 10"><circle cx="5" cy="5" r="4" fill="none" stroke="#808080" stroke-width="1.1"/></svg>
<div class="a" style="left:496px;top:934px;width:18px;height:18px;background:#2d2d2d;border-radius:3px;"></div>
<div class="a" style="left:515px;top:934px;width:18px;height:18px;background:#2d2d2d;border-radius:3px;"></div>
<div class="a" style="left:534px;top:934px;width:18px;height:18px;background:#2d2d2d;border-radius:3px;"></div>
<div class="a" style="left:573px;top:935px;width:16px;height:16px;background:#c6c6c6;border-radius:3px;"></div>
<svg class="a" style="left:593px;top:938.5px;" width="14" height="9" viewBox="0 0 14 9"><path d="M4 0H13.5V9H4L0 4.5Z" fill="#d6d6d6"/><circle cx="4.6" cy="4.5" r="1.7" fill="#353535"/></svg>
<div class="a" style="left:611px;top:935px;width:31px;height:16px;background:#333333;border-radius:3px;"></div>
<svg class="a" style="left:615.5px;top:939px;" width="4.5" height="8" viewBox="0 0 4.5 8"><path d="M0.3 0.3L4 4L0.3 7.7" fill="none" stroke="#9c9c9c" stroke-width="1.1"/></svg>
<svg class="a" style="left:648px;top:937px;" width="14" height="12" viewBox="0 0 14 12"><path d="M0.3 0.5H5L6.5 2.5H13.7V12H0.3Z" fill="#cfcfcf"/></svg>
<span class="t" style="left:667.3px;top:933.5px;font-size:12px;color:#a6a6a6;line-height:20px;">1</span>
<svg class="a" style="left:990.5px;top:938px;" width="10" height="10" viewBox="0 0 10 10"><circle cx="5" cy="5" r="4" fill="none" stroke="#808080" stroke-width="1.1"/></svg>
<div class="a" style="left:965px;top:803px;width:11px;height:16px;border-radius:2px;border:1px solid #e0c56a;"></div>
<svg class="a" style="left:652px;top:780px;" width="11" height="11" viewBox="0 0 11 11"><path d="M1.5 0V9.5H10" fill="none" stroke="#c8c8c8" stroke-width="1" stroke-dasharray="1 1" shape-rendering="crispEdges"/></svg>
<span class="t" style="left:666.3px;top:779.5px;font-size:12px;color:#e2e2e2;line-height:20px;letter-spacing:-0.05px;">Strength</span>
<div class="a" style="left:890px;top:774px;width:117px;height:30px;background:#353535;border:3px solid #b5e61d;"></div>
<div class="a" style="left:907px;top:782px;width:84px;height:15px;background:#292929;border-radius:3px;"></div>
<div class="a" style="left:990px;top:782px;width:13px;height:15px;background:#343434;border-radius:0 3px 3px 0;"></div>
<span class="t" style="left:911.0px;top:779.5px;font-size:12px;color:#6a6a6a;line-height:20px;letter-spacing:-1.05px;">%</span>
<span class="t" style="left:924.0px;top:779.5px;font-size:12px;color:#e2e2e2;line-height:20px;letter-spacing:-0.13px;">0.0</span>
<svg class="a" style="left:978.5px;top:785.5px;" width="8" height="8" viewBox="0 0 8 8"><path d="M4 0L8 4L4 8L0 4Z" fill="#2ecc71"/></svg>
<svg class="a" style="left:992.5px;top:786px;" width="7" height="7" viewBox="0 0 7 7"><path d="M0.5 0H2.5L6.5 3.5L2.5 7H0.5Z" fill="#9a9a9a"/></svg>
<div class="a" style="left:617px;top:753px;width:239px;height:28px;border:3px solid #b5e61d;"></div>
<div class="a" style="left:494px;top:955px;width:512px;height:7px;overflow:hidden;"><div class="a" style="left:2px;top:1px;width:18px;height:18px;background:#2d2d2d;border-radius:3px"></div><div class="a" style="left:21px;top:1px;width:18px;height:18px;background:#2d2d2d;border-radius:3px"></div><div class="a" style="left:40px;top:1px;width:18px;height:18px;background:#2d2d2d;border-radius:3px"></div><div class="a" style="left:79px;top:2px;width:16px;height:16px;background:#ffe680;border-radius:3px"></div><div class="a" style="left:154px;top:3px;width:14px;height:12px;border:1.5px solid #ffe680;background:#ddd;"></div></div>
<div class="a" style="left:1007px;top:713px;width:10px;height:236px;background:#4f4f4f;border-radius:5px;"></div>
<div class="a" style="left:495px;top:964px;width:509px;height:10px;background:#4f4f4f;border-radius:5px;"></div>
<div class="a" style="left:494px;top:976px;width:525px;height:22px;background:#444444;"></div>
<div class="a" style="left:497px;top:978px;width:19px;height:18px;background:#2b2b2b;border-radius:4px;border:1px solid #1c1c1c;"></div>
<svg class="a" style="left:499.5px;top:982.5px;" width="14" height="9" viewBox="0 0 14 9"><path d="M4 0H13.5V9H4L0 4.5Z" fill="#d6d6d6"/><circle cx="4.6" cy="4.5" r="1.7" fill="#2b2b2b"/></svg>
<span class="t" style="left:520.5px;top:977.5px;font-size:12px;color:#e2e2e2;line-height:20px;letter-spacing:-0.11px;">1 selected</span>
<div class="a" style="left:810px;top:978px;width:19px;height:18px;background:#2b2b2b;border-radius:4px;border:1px solid #1c1c1c;"></div>
<svg class="a" style="left:814px;top:981.5px;" width="11" height="11" viewBox="0 0 11 11"><rect x="0.6" y="0.6" width="9.8" height="9.8" fill="none" stroke="#e0e0e0" stroke-width="1.2"/><circle cx="5.5" cy="5.5" r="1.6" fill="#e0e0e0"/></svg>
<div class="a" style="left:833px;top:978px;width:183px;height:18px;background:#595959;border-radius:4px;"></div>
<div class="a" style="left:834px;top:979px;width:86px;height:16px;background:#2b2b2b;border-radius:3px;"></div>
<svg class="a" style="left:840px;top:982.5px;" width="12" height="9" viewBox="0 0 12 9"><path d="M0.5 0.8H11.5M2.5 4.5H9.5M0.5 8.2H11.5" stroke="#2ecc71" stroke-width="1.7"/></svg>
<span class="t" style="left:856.0px;top:977.5px;font-size:12px;color:#e2e2e2;line-height:20px;">Time Editor</span>
<svg class="a" style="left:928px;top:981.5px;" width="13" height="11" viewBox="0 0 13 11"><path d="M1.5 0V9.5H12.5" fill="none" stroke="#dcdcdc" stroke-width="1.1"/><path d="M0 10.5L4.5 6L12 1.5" fill="none" stroke="#dcdcdc" stroke-width="1.1"/></svg>
<span class="t" style="left:945.0px;top:977.5px;font-size:12px;color:#e2e2e2;line-height:20px;letter-spacing:-0.07px;">Graph Editor</span>
<div class="a" style="left:922px;top:666.8px;width:100px;height:29.2px;border:3px solid #b5e61d;"></div>
<div class="a" style="left:1026px;top:670px;width:888px;height:306px;background:#252525;"></div>
<svg class="a" style="left:0;top:670px" width="1914" height="24"><rect x="1033.50" y="17" width="1" height="7" fill="#c8c8c8"/><rect x="1043.94" y="20.5" width="1" height="3.5" fill="#9a9a9a"/><rect x="1054.38" y="20.5" width="1" height="3.5" fill="#9a9a9a"/><rect x="1064.82" y="20.5" width="1" height="3.5" fill="#9a9a9a"/><rect x="1075.27" y="20.5" width="1" height="3.5" fill="#9a9a9a"/><rect x="1085.71" y="17" width="1" height="7" fill="#c8c8c8"/><rect x="1096.15" y="20.5" width="1" height="3.5" fill="#9a9a9a"/><rect x="1106.59" y="20.5" width="1" height="3.5" fill="#9a9a9a"/><rect x="1117.03" y="20.5" width="1" height="3.5" fill="#9a9a9a"/><rect x="1127.47" y="20.5" width="1" height="3.5" fill="#9a9a9a"/><rect x="1137.91" y="17" width="1" height="7" fill="#c8c8c8"/><rect x="1148.36" y="20.5" width="1" height="3.5" fill="#9a9a9a"/><rect x="1158.80" y="20.5" width="1" height="3.5" fill="#9a9a9a"/><rect x="1169.24" y="20.5" width="1" height="3.5" fill="#9a9a9a"/><rect x="1179.68" y="20.5" width="1" height="3.5" fill="#9a9a9a"/><rect x="1190.12" y="17" width="1" height="7" fill="#c8c8c8"/><rect x="1200.56" y="20.5" width="1" height="3.5" fill="#9a9a9a"/><rect x="1211.01" y="20.5" width="1" height="3.5" fill="#9a9a9a"/><rect x="1221.45" y="20.5" width="1" height="3.5" fill="#9a9a9a"/><rect x="1231.89" y="20.5" width="1" height="3.5" fill="#9a9a9a"/><rect x="1242.33" y="17" width="1" height="7" fill="#c8c8c8"/><rect x="1252.77" y="20.5" width="1" height="3.5" fill="#9a9a9a"/><rect x="1263.21" y="20.5" width="1" height="3.5" fill="#9a9a9a"/><rect x="1273.65" y="20.5" width="1" height="3.5" fill="#9a9a9a"/><rect x="1284.10" y="20.5" width="1" height="3.5" fill="#9a9a9a"/><rect x="1294.54" y="17" width="1" height="7" fill="#c8c8c8"/><rect x="1304.98" y="20.5" width="1" height="3.5" fill="#9a9a9a"/><rect x="1315.42" y="20.5" width="1" height="3.5" fill="#9a9a9a"/><rect x="1325.86" y="20.5" width="1" height="3.5" fill="#9a9a9a"/><rect x="1336.30" y="20.5" width="1" height="3.5" fill="#9a9a9a"/><rect x="1346.74" y="17" width="1" height="7" fill="#c8c8c8"/><rect x="1357.19" y="20.5" width="1" height="3.5" fill="#9a9a9a"/><rect x="1367.63" y="20.5" width="1" height="3.5" fill="#9a9a9a"/><rect x="1378.07" y="20.5" width="1" height="3.5" fill="#9a9a9a"/><rect x="1388.51" y="20.5" width="1" height="3.5" fill="#9a9a9a"/><rect x="1398.95" y="17" width="1" height="7" fill="#c8c8c8"/><rect x="1409.39" y="20.5" width="1" height="3.5" fill="#9a9a9a"/><rect x="1419.84" y="20.5" width="1" height="3.5" fill="#9a9a9a"/><rect x="1430.28" y="20.5" width="1" height="3.5" fill="#9a9a9a"/><rect x="1440.72" y="20.5" width="1" height="3.5" fill="#9a9a9a"/><rect x="1451.16" y="17" width="1" height="7" fill="#c8c8c8"/><rect x="1461.60" y="20.5" width="1" height="3.5" fill="#9a9a9a"/><rect x="1472.04" y="20.5" width="1" height="3.5" fill="#9a9a9a"/><rect x="1482.48" y="20.5" width="1" height="3.5" fill="#9a9a9a"/><rect x="1492.93" y="20.5" width="1" height="3.5" fill="#9a9a9a"/><rect x="1503.37" y="17" width="1" height="7" fill="#c8c8c8"/><rect x="1513.81" y="20.5" width="1" height="3.5" fill="#9a9a9a"/><rect x="1524.25" y="20.5" width="1" height="3.5" fill="#9a9a9a"/><rect x="1534.69" y="20.5" width="1" height="3.5" fill="#9a9a9a"/><rect x="1545.13" y="20.5" width="1" height="3.5" fill="#9a9a9a"/><rect x="1555.58" y="17" width="1" height="7" fill="#c8c8c8"/><rect x="1566.02" y="20.5" width="1" height="3.5" fill="#9a9a9a"/><rect x="1576.46" y="20.5" width="1" height="3.5" fill="#9a9a9a"/><rect x="1586.90" y="20.5" width="1" height="3.5" fill="#9a9a9a"/><rect x="1597.34" y="20.5" width="1" height="3.5" fill="#9a9a9a"/><rect x="1607.78" y="17" width="1" height="7" fill="#c8c8c8"/><rect x="1618.22" y="20.5" width="1" height="3.5" fill="#9a9a9a"/><rect x="1628.67" y="20.5" width="1" height="3.5" fill="#9a9a9a"/><rect x="1639.11" y="20.5" width="1" height="3.5" fill="#9a9a9a"/><rect x="1649.55" y="20.5" width="1" height="3.5" fill="#9a9a9a"/><rect x="1659.99" y="17" width="1" height="7" fill="#c8c8c8"/><rect x="1670.43" y="20.5" width="1" height="3.5" fill="#9a9a9a"/><rect x="1680.87" y="20.5" width="1" height="3.5" fill="#9a9a9a"/><rect x="1691.31" y="20.5" width="1" height="3.5" fill="#9a9a9a"/><rect x="1701.76" y="20.5" width="1" height="3.5" fill="#9a9a9a"/><rect x="1712.20" y="17" width="1" height="7" fill="#c8c8c8"/><rect x="1722.64" y="20.5" width="1" height="3.5" fill="#9a9a9a"/><rect x="1733.08" y="20.5" width="1" height="3.5" fill="#9a9a9a"/><rect x="1743.52" y="20.5" width="1" height="3.5" fill="#9a9a9a"/><rect x="1753.96" y="20.5" width="1" height="3.5" fill="#9a9a9a"/><rect x="1764.41" y="17" width="1" height="7" fill="#c8c8c8"/><rect x="1774.85" y="20.5" width="1" height="3.5" fill="#9a9a9a"/><rect x="1785.29" y="20.5" width="1" height="3.5" fill="#9a9a9a"/><rect x="1795.73" y="20.5" width="1" height="3.5" fill="#9a9a9a"/><rect x="1806.17" y="20.5" width="1" height="3.5" fill="#9a9a9a"/><rect x="1816.61" y="17" width="1" height="7" fill="#c8c8c8"/><rect x="1827.05" y="20.5" width="1" height="3.5" fill="#9a9a9a"/><rect x="1837.50" y="20.5" width="1" height="3.5" fill="#9a9a9a"/><rect x="1847.94" y="20.5" width="1" height="3.5" fill="#9a9a9a"/><rect x="1858.38" y="20.5" width="1" height="3.5" fill="#9a9a9a"/><rect x="1868.82" y="17" width="1" height="7" fill="#c8c8c8"/><rect x="1879.26" y="20.5" width="1" height="3.5" fill="#9a9a9a"/><rect x="1889.70" y="20.5" width="1" height="3.5" fill="#9a9a9a"/><rect x="1900.14" y="20.5" width="1" height="3.5" fill="#9a9a9a"/><rect x="1910.59" y="20.5" width="1" height="3.5" fill="#9a9a9a"/></svg>
<span class="t" style="left:1028.8px;top:671.5px;font-size:12px;color:#e0e0e0;line-height:14px;">0</span>
<span class="t" style="left:1079.5px;top:671.5px;font-size:12px;color:#e0e0e0;line-height:14px;">15</span>
<span class="t" style="left:1131.7px;top:671.5px;font-size:12px;color:#e0e0e0;line-height:14px;">30</span>
<span class="t" style="left:1184.0px;top:671.5px;font-size:12px;color:#e0e0e0;line-height:14px;">45</span>
<span class="t" style="left:1236.2px;top:671.5px;font-size:12px;color:#e0e0e0;line-height:14px;">60</span>
<span class="t" style="left:1288.4px;top:671.5px;font-size:12px;color:#e0e0e0;line-height:14px;">75</span>
<span class="t" style="left:1340.6px;top:671.5px;font-size:12px;color:#e0e0e0;line-height:14px;">90</span>
<span class="t" style="left:1389.4px;top:671.5px;font-size:12px;color:#e0e0e0;line-height:14px;">105</span>
<span class="t" style="left:1441.7px;top:671.5px;font-size:12px;color:#e0e0e0;line-height:14px;">120</span>
<span class="t" style="left:1493.9px;top:671.5px;font-size:12px;color:#e0e0e0;line-height:14px;">135</span>
<span class="t" style="left:1546.1px;top:671.5px;font-size:12px;color:#e0e0e0;line-height:14px;">150</span>
<span class="t" style="left:1598.3px;top:671.5px;font-size:12px;color:#e0e0e0;line-height:14px;">165</span>
<span class="t" style="left:1650.5px;top:671.5px;font-size:12px;color:#e0e0e0;line-height:14px;">180</span>
<span class="t" style="left:1702.7px;top:671.5px;font-size:12px;color:#e0e0e0;line-height:14px;">195</span>
<span class="t" style="left:1754.9px;top:671.5px;font-size:12px;color:#e0e0e0;line-height:14px;">210</span>
<span class="t" style="left:1807.1px;top:671.5px;font-size:12px;color:#e0e0e0;line-height:14px;">225</span>
<span class="t" style="left:1859.3px;top:671.5px;font-size:12px;color:#e0e0e0;line-height:14px;">240</span>
<div class="a" style="left:1034px;top:695px;width:871px;height:15px;background:#444444;"></div>
<div class="a" style="left:1029px;top:693px;width:5px;height:18px;background:#6fcfb5;border-radius:1px;"></div>
<div class="a" style="left:1905px;top:693px;width:5px;height:18px;background:#6fcfb5;border-radius:1px;"></div>
<div class="a" style="left:1034px;top:714px;width:871px;height:18px;background:#c8f07a;background:repeating-linear-gradient(135deg,#ecfb9c 0,#e4f994 1.3px,#d2f584 2.2px,#c8ee7c 12.8px,#ecfb9c 12.8px,#e2f792 14.1px,#b5d970 15px,#bee278 25.6px);"></div>
<span class="t" style="left:1042.0px;top:712.5px;font-size:12px;color:#1e1e1e;line-height:20px;letter-spacing:0.06px;">TransitionOffset</span>
<div class="a" style="left:1034px;top:736px;width:871px;height:18px;background:#c4c4c4;border-radius:3px;"></div>
<span class="t" style="left:1042.0px;top:734.5px;font-size:12px;color:#484848;line-height:20px;">4</span>
<div class="a" style="left:1034px;top:758px;width:871px;height:18px;background:#dff5a8;border:1.3px solid #fafafa;background:radial-gradient(circle at 0.8px 0.9px,rgba(150,200,75,0.8) 0.5px,rgba(150,200,75,0) 1px) 0 0/2.5px 3px,radial-gradient(circle at 0.8px 0.9px,rgba(150,200,75,0.35) 0.5px,rgba(150,200,75,0) 1px) 1.25px 1.5px/2.5px 3px,repeating-linear-gradient(135deg,#ecf9ac 0,#ecf9ac 12.8px,#dff09c 12.8px,#dff09c 25.6px);"></div>
<span class="t" style="left:1042.0px;top:756.5px;font-size:12px;color:#1e1e1e;line-height:20px;letter-spacing:-0.08px;">TransitionNoise</span>
<div class="a" style="left:1034px;top:802px;width:871px;height:18px;background:#ffe680;border-radius:3px;"></div>
<span class="t" style="left:1042.0px;top:800.5px;font-size:12px;color:#1e1e1e;line-height:20px;letter-spacing:0.05px;">WaveDuplicator</span>
<div class="a" style="left:1034px;top:824px;width:871px;height:18px;background:#ffe680;border-radius:3px;"></div>
<span class="t" style="left:1042.0px;top:822.5px;font-size:12px;color:#1e1e1e;line-height:20px;letter-spacing:-0.15px;">InputShape</span>
<div class="a" style="left:1034px;top:846px;width:871px;height:18px;background:#c4c4c4;border-radius:3px;"></div>
<span class="t" style="left:1042.0px;top:844.5px;font-size:12px;color:#484848;line-height:20px;">3</span>
<div class="a" style="left:1034px;top:868px;width:871px;height:18px;background:#c8f07a;background:repeating-linear-gradient(135deg,#ecfb9c 0,#e4f994 1.3px,#d2f584 2.2px,#c8ee7c 12.8px,#ecfb9c 12.8px,#e2f792 14.1px,#b5d970 15px,#bee278 25.6px);"></div>
<span class="t" style="left:1042.0px;top:866.5px;font-size:12px;color:#1e1e1e;line-height:20px;letter-spacing:0.28px;">2to3</span>
<div class="a" style="left:1034px;top:890px;width:871px;height:18px;background:#c4c4c4;border-radius:3px;"></div>
<span class="t" style="left:1042.0px;top:888.5px;font-size:12px;color:#484848;line-height:20px;">2</span>
<div class="a" style="left:1034px;top:912px;width:871px;height:18px;background:#c8f07a;background:repeating-linear-gradient(135deg,#ecfb9c 0,#e4f994 1.3px,#d2f584 2.2px,#c8ee7c 12.8px,#ecfb9c 12.8px,#e2f792 14.1px,#b5d970 15px,#bee278 25.6px);"></div>
<span class="t" style="left:1042.0px;top:910.5px;font-size:12px;color:#1e1e1e;line-height:20px;letter-spacing:0.21px;">1to2 &amp; 4to1</span>
<div class="a" style="left:1034px;top:934px;width:871px;height:18px;background:#c4c4c4;border-radius:3px;"></div>
<span class="t" style="left:1042.0px;top:932.5px;font-size:12px;color:#484848;line-height:20px;">1</span>
<div class="a" style="left:1034px;top:956px;width:871px;height:6px;overflow:hidden;"><div class="a" style="left:0;top:0;width:871px;height:18px;background:#ffe680;border-radius:3px"></div><span class="t" style="left:8px;top:0px;font-size:12px;line-height:20px;color:#2a2a2a">Background Shape</span></div>
<svg class="a" style="left:1164px;top:875px;" width="4" height="4" viewBox="0 0 4 4"><circle cx="2" cy="2" r="1.9" fill="#7f9a52"/></svg>
<svg class="a" style="left:1254.7px;top:875px;" width="4" height="4" viewBox="0 0 4 4"><circle cx="2" cy="2" r="1.9" fill="#7f9a52"/></svg>
<svg class="a" style="left:1112px;top:919px;" width="4" height="4" viewBox="0 0 4 4"><circle cx="2" cy="2" r="1.9" fill="#7f9a52"/></svg>
<svg class="a" style="left:1401.3px;top:919px;" width="4" height="4" viewBox="0 0 4 4"><circle cx="2" cy="2" r="1.9" fill="#7f9a52"/></svg>
<svg class="a" style="left:1474.4px;top:919px;" width="4" height="4" viewBox="0 0 4 4"><circle cx="2" cy="2" r="1.9" fill="#7f9a52"/></svg>
<div class="a" style="left:1395.6px;top:692px;width:1.2px;height:270px;background:#6fcfb5;"></div>
<svg class="a" style="left:1389px;top:684px;" width="14.4" height="10" viewBox="0 0 14.4 10"><path d="M0 0H14.4L8.5 9.5H5.9Z" fill="#6fcfb5"/></svg>
<svg class="a" style="left:1392px;top:784px;" width="8" height="8" viewBox="0 0 8 8"><path d="M4 0L8 4L4 8L0 4Z" fill="#cfcfcf"/></svg>
<div class="a" style="left:1023.5px;top:822px;width:1.5px;height:1.5px;background:#777;"></div>
<div class="a" style="left:1023.5px;top:825px;width:1.5px;height:1.5px;background:#777;"></div>
<div class="a" style="left:1023.5px;top:828px;width:1.5px;height:1.5px;background:#777;"></div>
<div class="a" style="left:1023.5px;top:831px;width:1.5px;height:1.5px;background:#777;"></div>
<div class="a" style="left:1023.5px;top:834px;width:1.5px;height:1.5px;background:#777;"></div>
<div class="a" style="left:1023.5px;top:837px;width:1.5px;height:1.5px;background:#777;"></div>
<div class="a" style="left:1023.5px;top:840px;width:1.5px;height:1.5px;background:#777;"></div>
<div class="a" style="left:1023.5px;top:843px;width:1.5px;height:1.5px;background:#777;"></div>
<div class="a" style="left:1916px;top:822px;width:1.5px;height:1.5px;background:#777;"></div>
<div class="a" style="left:1916px;top:825px;width:1.5px;height:1.5px;background:#777;"></div>
<div class="a" style="left:1916px;top:828px;width:1.5px;height:1.5px;background:#777;"></div>
<div class="a" style="left:1916px;top:831px;width:1.5px;height:1.5px;background:#777;"></div>
<div class="a" style="left:1916px;top:834px;width:1.5px;height:1.5px;background:#777;"></div>
<div class="a" style="left:1916px;top:837px;width:1.5px;height:1.5px;background:#777;"></div>
<div class="a" style="left:1916px;top:840px;width:1.5px;height:1.5px;background:#777;"></div>
<div class="a" style="left:1916px;top:843px;width:1.5px;height:1.5px;background:#777;"></div>
<div class="a" style="left:1028px;top:964px;width:885px;height:10px;background:#4f4f4f;border-radius:5px;"></div>
<div class="a" style="left:1026px;top:976px;width:888px;height:22px;background:#444444;"></div>
<div class="a" style="left:1029px;top:978px;width:18px;height:18px;background:#2b2b2b;border-radius:4px;border:1px solid #1c1c1c;"></div>
<svg class="a" style="left:1031.5px;top:981px;" width="13" height="12" viewBox="0 0 13 12"><path d="M0 1H13M0 5.5H13" stroke="#e4e4e4" stroke-width="1.6"/><path d="M0 10H3M4.5 10H7.5M9 10H11" stroke="#e4e4e4" stroke-width="1.6"/><path d="M10.5 13h2.5v-2.5z" fill="#2ecc71"/></svg>
<div class="a" style="left:1050px;top:979px;width:150px;height:16px;background:#292929;border-radius:3px;"></div>
<span class="t" style="left:1052.5px;top:977.5px;font-size:12px;color:#e2e2e2;line-height:20px;letter-spacing:-0.06px;">Default Keyframe Layer</span>
<div class="a" style="left:1206px;top:979px;width:70px;height:16px;background:#292929;border-radius:3px;"></div>
<span class="t" style="left:1211.0px;top:977.5px;font-size:12px;color:#4e4e4e;line-height:20px;letter-spacing:-0.55px;">F</span>
<span class="t" style="left:1224.0px;top:977.5px;font-size:12px;color:#e2e2e2;line-height:20px;letter-spacing:0.45px;">-</span>
<span class="t" style="left:1282.5px;top:977.5px;font-size:12px;color:#e2e2e2;line-height:20px;letter-spacing:-0.05px;">Align:</span>
<div class="a" style="left:1318.7px;top:978.7px;width:52.2px;height:16.6px;background:#2b2b2b;border-radius:4px;border:1px solid #222;"></div>
<div class="a" style="left:1335.6px;top:979.2px;width:1px;height:15.6px;background:#222;"></div>
<div class="a" style="left:1353.4px;top:979.2px;width:1px;height:15.6px;background:#222;"></div>
<svg class="a" style="left:1316px;top:976px" width="60" height="22" viewBox="1316 976 60 22"><rect x="1321.1" y="980.5" width="1.0" height="13.5" fill="#e8e8e8"/><rect x="1324.0" y="983.0" width="2.0" height="2.0" fill="#7ad3bb"/><rect x="1324.0" y="989.2" width="2.0" height="2.0" fill="#7ad3bb"/><rect x="1327.0" y="983.0" width="3.0" height="2.0" fill="#e8e8e8"/><rect x="1327.0" y="989.2" width="6.8" height="2.0" fill="#e8e8e8"/><rect x="1345.0" y="980.5" width="1.0" height="13.5" fill="#e8e8e8"/><rect x="1344.5" y="983.0" width="2.0" height="2.0" fill="#7ad3bb"/><rect x="1344.5" y="989.2" width="2.0" height="2.0" fill="#7ad3bb"/><rect x="1342.0" y="983.0" width="1.5" height="2.0" fill="#e8e8e8"/><rect x="1347.5" y="983.0" width="1.7" height="2.0" fill="#e8e8e8"/><rect x="1340.0" y="989.2" width="3.5" height="2.0" fill="#e8e8e8"/><rect x="1347.5" y="989.2" width="3.5" height="2.0" fill="#e8e8e8"/><rect x="1367.9" y="980.5" width="1.0" height="13.5" fill="#e8e8e8"/><rect x="1364.0" y="983.0" width="2.0" height="2.0" fill="#7ad3bb"/><rect x="1364.0" y="989.2" width="2.0" height="2.0" fill="#7ad3bb"/><rect x="1360.1" y="983.0" width="2.9" height="2.0" fill="#e8e8e8"/><rect x="1356.0" y="989.2" width="7.0" height="2.0" fill="#e8e8e8"/></svg>
<div class="a" style="left:1375.4px;top:978.5px;width:17.3px;height:17px;background:#3a3a3a;border-radius:4px;border:1px solid #262626;"></div>
<svg class="a" style="left:1378px;top:981px;" width="12" height="12" viewBox="0 0 12 12"><rect x="1.5" y="1.5" width="9" height="9" fill="none" stroke="#a8a8a8" stroke-width="1"/><g fill="#b8b8b8"><rect x="0.3" y="0.3" width="2.4" height="2.4"/><rect x="9.3" y="0.3" width="2.4" height="2.4"/><rect x="0.3" y="9.3" width="2.4" height="2.4"/><rect x="9.3" y="9.3" width="2.4" height="2.4"/><rect x="5" y="5" width="2" height="2" fill="#e0e0e0"/></g></svg>
<div class="a" style="left:1396.3px;top:977px;width:30.5px;height:18.6px;background:#333;border-radius:4px;"></div>
<div class="a" style="left:1396.3px;top:977px;width:18.3px;height:18.6px;background:#484848;border-radius:4px 0 0 4px;"></div>
<div class="a" style="left:1414.4px;top:977px;width:1px;height:18.6px;background:#3a3a3a;"></div>
<div class="a" style="left:1396.3px;top:977px;width:30.5px;height:18.6px;border-radius:4px;border:1px solid #2c2c2c;"></div>
<svg class="a" style="left:1398.5px;top:979.5px;" width="14" height="14" viewBox="0 0 14 14"><g transform="rotate(-35 7 7)"><path d="M3.2 12.5V6.2Q3.2 2.2 7 2.2Q10.8 2.2 10.8 6.2V12.5" fill="none" stroke="#e0e0e0" stroke-width="2.3"/><path d="M2 10.6H4.4M9.6 10.6H12" stroke="#484848" stroke-width="0.9"/></g></svg>
<svg class="a" style="left:1418px;top:982.5px;" width="6" height="8" viewBox="0 0 6 8"><path d="M0.6 0.6V7.4L5.6 4Z" fill="none" stroke="#8a8a8a" stroke-width="1"/></svg>
<div class="a" style="left:1431.3px;top:977.2px;width:31px;height:18.8px;background:#333;border-radius:4px;"></div>
<div class="a" style="left:1431.3px;top:977.2px;width:18.4px;height:18.8px;background:#3c3c3c;border-radius:4px 0 0 4px;"></div>
<div class="a" style="left:1449.5px;top:977.2px;width:1px;height:18.8px;background:#3a3a3a;"></div>
<div class="a" style="left:1431.3px;top:977.2px;width:31px;height:18.8px;border-radius:4px;border:1px solid #2c2c2c;"></div>
<svg class="a" style="left:1433.5px;top:980.5px;" width="14" height="12" viewBox="0 0 14 12"><path d="M0 6H3.4M10 6H13.6" stroke="#e0e0e0" stroke-width="1"/><path d="M5 0V12" stroke="#e0e0e0" stroke-width="1.1"/><path d="M7 3.5V8.5M8.8 4.8V7.2" stroke="#e0e0e0" stroke-width="1"/></svg>
<svg class="a" style="left:1453px;top:982.7px;" width="6" height="8" viewBox="0 0 6 8"><path d="M0.6 0.6V7.4L5.6 4Z" fill="none" stroke="#8a8a8a" stroke-width="1"/></svg>
<svg class="a" style="left:1744.0px;top:981.5px;" width="14" height="14" viewBox="0 0 14 14"><circle cx="5.5" cy="5.5" r="4.8" fill="none" stroke="#e0e0e0" stroke-width="1"/><path d="M3 5.5H8" stroke="#e0e0e0" stroke-width="1"/><path d="M9 9L12.5 12.5" stroke="#e0e0e0" stroke-width="1.6"/></svg>
<svg class="a" style="left:1888.0px;top:981.5px;" width="14" height="14" viewBox="0 0 14 14"><circle cx="5.5" cy="5.5" r="4.8" fill="none" stroke="#e0e0e0" stroke-width="1"/><path d="M3 5.5H8" stroke="#e0e0e0" stroke-width="1"/><path d="M5.5 3V8" stroke="#e0e0e0" stroke-width="1"/><path d="M9 9L12.5 12.5" stroke="#e0e0e0" stroke-width="1.6"/></svg>
<div class="a" style="left:1767px;top:986px;width:115px;height:2px;background:#555;border-radius:1px;"></div>
<svg class="a" style="left:1761.5px;top:981.5px;" width="11" height="11" viewBox="0 0 11 11"><circle cx="5.5" cy="5.5" r="5.2" fill="#7ad3bb"/><circle cx="5.5" cy="5.5" r="2" fill="#4fae96"/></svg>
<div class="a" style="left:494px;top:1004px;width:1420px;height:22px;background:#444;"></div>
<div class="a" style="left:498px;top:1010.8px;width:2px;height:1.7px;background:#8c8c8c;"></div>
<div class="a" style="left:498px;top:1014.6px;width:2px;height:1.7px;background:#8c8c8c;"></div>
<div class="a" style="left:498px;top:1018.4px;width:2px;height:1.7px;background:#8c8c8c;"></div>
<div class="a" style="left:507px;top:1006px;width:18px;height:18px;background:#2b2b2b;border-radius:4px;border:1px solid #1c1c1c;"></div>
<svg class="a" style="left:509.5px;top:1009px;" width="13" height="12" viewBox="0 0 13 12"><path d="M0.5 0.5H12.5V8.5H10V11.5L7 8.5H0.5Z" fill="#e4e4e4"/><path d="M2.5 3H10.5M2.5 5.8H10.5" stroke="#2b2b2b" stroke-width="1.1"/><path d="M10.5 13h2.5v-2.5z" fill="#2ecc71"/></svg>
<div class="a" style="left:528px;top:1008px;width:18px;height:14px;background:#2ecc71;border-radius:2px;"></div>
<span class="t" style="left:530.2px;top:1005.5px;font-size:12px;color:#111;line-height:20px;letter-spacing:-0.03px;">9+</span>
<svg class="a" style="left:554px;top:1012px;" width="6" height="6" viewBox="0 0 6 6"><circle cx="3" cy="3" r="3" fill="#2ecc71"/></svg>
<span class="t" style="left:565.0px;top:1005.5px;font-size:12px;color:#e2e2e2;line-height:20px;letter-spacing:-0.09px;">Saved scene to: D:/DATA/AI Creator/Cavalry/responsive-grid.cv.</span>
<span class="t" style="left:1349.5px;top:1005.5px;font-size:12px;color:#e2e2e2;line-height:20px;letter-spacing:-0.74px;font-style:italic;">Click to see next message</span>
<div class="a" style="left:1477px;top:1006px;width:80px;height:18px;background:#d2ba6c;border-radius:2px;"></div>
<span class="t" style="left:1482.5px;top:1005.5px;font-size:12px;color:#1e1e1e;line-height:20px;letter-spacing:-0.31px;">Feedback</span>
<div class="a" style="left:1560px;top:1006px;width:109px;height:18px;background:#2ecc71;border-radius:2px;"></div>
<span class="t" style="left:1565.5px;top:1005.5px;font-size:12px;color:#1e1e1e;line-height:20px;letter-spacing:-0.09px;">Upgrade to Pro</span>
<div class="a" style="left:1672px;top:1006px;width:130px;height:18px;background:#b692f6;border-radius:2px;"></div>
<span class="t" style="left:1677.5px;top:1005.5px;font-size:12px;color:#1e1e1e;line-height:20px;letter-spacing:-0.09px;">New Beta Available</span>
<div class="a" style="left:1805px;top:1006px;width:106px;height:18px;background:#3daef5;border-radius:2px;"></div>
<span class="t" style="left:1810.5px;top:1005.5px;font-size:12px;color:#1e1e1e;line-height:20px;letter-spacing:-0.21px;">Tips and Tricks</span>
<svg class="a" style="left:1539px;top:1009px;" width="12" height="12" viewBox="0 0 12 12"><path d="M1 0.5H7.5L10 3V11.5H1Z" fill="#f4f4f4"/><path d="M2.5 4H7M2.5 6H7M2.5 8H5.5" stroke="#b0b0b0" stroke-width="0.8"/><path d="M5 10.5L10.5 4.5L12 6L6.5 11.5L4.5 12Z" fill="#f0843a"/></svg>
<svg class="a" style="left:1649px;top:1010px;" width="14" height="11" viewBox="0 0 14 11"><path d="M1 10V5Q1 2 3 1.5Q4.5 1.2 4.8 3L6.3 8.5V10.5H1Z" fill="#f7c83c"/><path d="M13 10V5Q13 2 11 1.5Q9.5 1.2 9.2 3L7.7 8.5V10.5H13Z" fill="#f7c83c"/></svg>
<svg class="a" style="left:1783px;top:1009px;" width="13" height="13" viewBox="0 0 13 13"><circle cx="6.5" cy="7" r="5.5" fill="#f7c83c"/><path d="M2 3.5L6 0L8.5 4.5Z" fill="#7b5cd6"/><path d="M4 8.5Q6.5 11.5 9 8.5Z" fill="#7a3b1a"/><circle cx="4.5" cy="6.3" r="0.8" fill="#7a3b1a"/><circle cx="8.5" cy="6.3" r="0.8" fill="#7a3b1a"/><path d="M9.5 5.5L12.8 4V8Z" fill="#e8504a"/></svg>
<svg class="a" style="left:1892px;top:1009px;" width="13" height="13" viewBox="0 0 13 13"><path d="M12.5 0.5Q7 0.5 4 5.5L7.5 9Q12.5 6 12.5 0.5Z" fill="#e8e8f0"/><circle cx="8.8" cy="4.2" r="1.3" fill="#4aa3e8"/><path d="M4 5.5L1 6L3 8ZM7.5 9L7 12L5 10Z" fill="#e8504a"/><path d="M3.5 9.5Q1.5 10 1 12Q3 11.5 3.5 9.5Z" fill="#f7a23c"/></svg>
</body></html>
